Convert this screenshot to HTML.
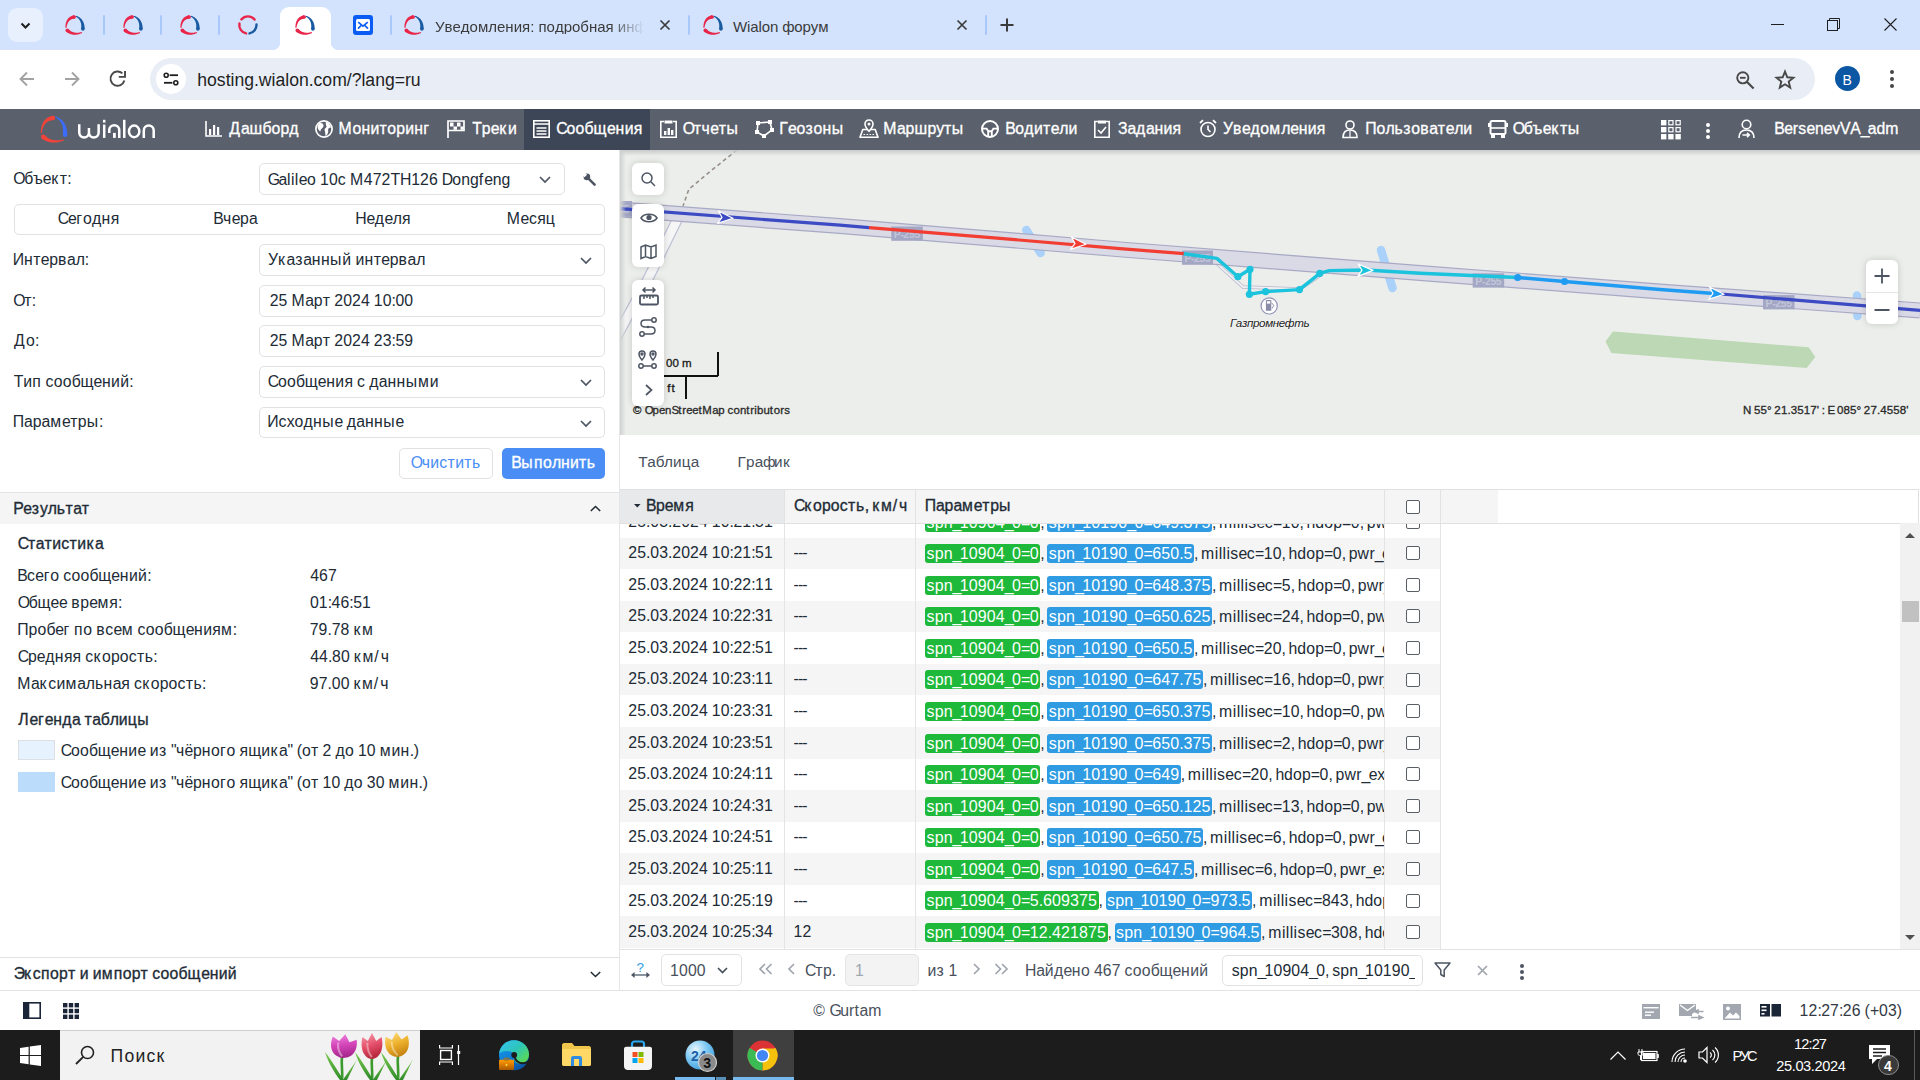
<!DOCTYPE html>
<html><head><meta charset="utf-8"><style>
*{box-sizing:border-box;margin:0;padding:0}
html,body{width:1920px;height:1080px;overflow:hidden;background:#fff;font-family:"Liberation Sans",sans-serif;color:#212b36}
.a{position:absolute}
.t{position:absolute;white-space:nowrap;line-height:1;font-kerning:none}
i{font-style:inherit}
svg{position:absolute;overflow:visible}
.km34{letter-spacing:-1.70px}.km33{letter-spacing:-1.65px}.km31{letter-spacing:-1.55px}.km30{letter-spacing:-1.50px}.km28{letter-spacing:-1.40px}.km26{letter-spacing:-1.30px}.km23{letter-spacing:-1.15px}.km22{letter-spacing:-1.10px}.km21{letter-spacing:-1.05px}.km20{letter-spacing:-1.00px}.km19{letter-spacing:-0.95px}.km18{letter-spacing:-0.90px}.km17{letter-spacing:-0.85px}.km14{letter-spacing:-0.70px}.km11{letter-spacing:-0.55px}.km9{letter-spacing:-0.45px}.km8{letter-spacing:-0.40px}.km7{letter-spacing:-0.35px}.km6{letter-spacing:-0.30px}.km5{letter-spacing:-0.25px}.km4{letter-spacing:-0.20px}.km3{letter-spacing:-0.15px}.km2{letter-spacing:-0.10px}.km1{letter-spacing:-0.05px}.k1{letter-spacing:0.05px}.k2{letter-spacing:0.10px}.k3{letter-spacing:0.15px}.k4{letter-spacing:0.20px}.k5{letter-spacing:0.25px}.k6{letter-spacing:0.30px}.k7{letter-spacing:0.35px}.k8{letter-spacing:0.40px}.k9{letter-spacing:0.45px}.k10{letter-spacing:0.50px}.k11{letter-spacing:0.55px}.k12{letter-spacing:0.60px}.k13{letter-spacing:0.65px}.k14{letter-spacing:0.70px}.k15{letter-spacing:0.75px}.k16{letter-spacing:0.80px}.k17{letter-spacing:0.85px}.k18{letter-spacing:0.90px}.k20{letter-spacing:1.00px}.k22{letter-spacing:1.10px}.k23{letter-spacing:1.15px}.k24{letter-spacing:1.20px}.k27{letter-spacing:1.35px}.k32{letter-spacing:1.60px}.k33{letter-spacing:1.65px}.k35{letter-spacing:1.75px}.k36{letter-spacing:1.80px}.k43{letter-spacing:2.15px}</style></head><body>
<svg width="0" height="0" style="position:absolute"><defs><symbol id="wl" viewBox="0 0 20 20"><path d="M8.97 0.22 L8.36 0.35 L7.77 0.52 L7.20 0.71 L6.65 0.93 L6.12 1.18 L5.61 1.45 L5.12 1.74 L4.66 2.07 L4.22 2.41 L3.80 2.78 L3.41 3.18 L3.05 3.59 L2.71 4.03 L2.39 4.48 L2.10 4.96 L1.84 5.45 L1.60 5.97 L1.38 6.49 L1.18 7.04 L1.01 7.61 L0.86 8.19 L0.73 8.79 L0.62 9.40 L0.53 10.04 L0.45 10.69 L0.40 11.36 L0.37 12.05 L0.35 12.76 L1.45 12.84 L1.55 12.17 L1.67 11.53 L1.80 10.91 L1.96 10.32 L2.12 9.76 L2.31 9.22 L2.50 8.71 L2.71 8.23 L2.94 7.78 L3.18 7.35 L3.43 6.95 L3.70 6.58 L3.97 6.23 L4.26 5.92 L4.55 5.62 L4.86 5.36 L5.18 5.11 L5.50 4.89 L5.84 4.69 L6.18 4.51 L6.54 4.36 L6.91 4.22 L7.30 4.10 L7.69 4.00 L8.10 3.92 L8.53 3.86 L8.97 3.81 L9.43 3.78 Z" fill="#e8264a"/><circle cx="9.20" cy="2.00" r="1.80" fill="#e8264a"/><path d="M1.09 16.73 L1.58 17.10 L2.08 17.45 L2.59 17.78 L3.11 18.08 L3.64 18.35 L4.17 18.60 L4.71 18.83 L5.26 19.03 L5.81 19.20 L6.37 19.35 L6.93 19.48 L7.50 19.58 L8.07 19.66 L8.65 19.71 L9.23 19.74 L9.82 19.75 L10.41 19.73 L11.00 19.69 L11.60 19.63 L12.20 19.55 L12.81 19.44 L13.42 19.32 L14.03 19.17 L14.65 19.00 L15.27 18.81 L15.90 18.60 L16.53 18.37 L17.17 18.12 L16.83 17.08 L16.19 17.24 L15.56 17.37 L14.95 17.48 L14.34 17.58 L13.75 17.65 L13.17 17.70 L12.61 17.73 L12.05 17.74 L11.51 17.73 L10.98 17.70 L10.47 17.65 L9.97 17.58 L9.48 17.49 L9.00 17.39 L8.53 17.26 L8.08 17.12 L7.64 16.96 L7.22 16.78 L6.80 16.59 L6.40 16.38 L6.00 16.15 L5.62 15.90 L5.25 15.64 L4.88 15.36 L4.53 15.06 L4.18 14.75 L3.84 14.42 L3.51 14.07 Z" fill="#e8264a"/><circle cx="2.30" cy="15.40" r="1.80" fill="#e8264a"/><path d="M10.78 1.70 L11.26 1.97 L11.72 2.25 L12.15 2.55 L12.55 2.85 L12.94 3.17 L13.30 3.50 L13.63 3.85 L13.95 4.20 L14.24 4.56 L14.51 4.94 L14.76 5.33 L14.99 5.73 L15.20 6.14 L15.39 6.56 L15.56 6.99 L15.71 7.44 L15.84 7.90 L15.96 8.37 L16.06 8.85 L16.13 9.35 L16.19 9.87 L16.24 10.40 L16.26 10.94 L16.26 11.50 L16.25 12.08 L16.22 12.67 L16.17 13.28 L16.10 13.91 L19.70 14.09 L19.68 13.36 L19.64 12.65 L19.58 11.95 L19.50 11.27 L19.39 10.61 L19.27 9.96 L19.12 9.33 L18.95 8.72 L18.75 8.12 L18.54 7.55 L18.30 6.99 L18.04 6.46 L17.76 5.94 L17.46 5.44 L17.14 4.97 L16.79 4.51 L16.43 4.08 L16.04 3.66 L15.64 3.27 L15.22 2.90 L14.78 2.55 L14.32 2.23 L13.84 1.92 L13.35 1.64 L12.84 1.37 L12.32 1.13 L11.78 0.90 L11.22 0.70 Z" fill="#1a5aa0"/><circle cx="17.90" cy="14.00" r="1.80" fill="#1a5aa0"/></symbol></defs></svg>
<div class="a" style="left:0.00px;top:0.00px;width:1920.00px;height:50.00px;background:#d3e3fd"></div>
<div class="a" style="left:0.00px;top:50.00px;width:1920.00px;height:59.00px;background:#fff;border-radius:10px 10px 0 0"></div>
<div class="a" style="left:150.00px;top:58.00px;width:1665.00px;height:42.00px;background:#e9eef6;border-radius:21px"></div>
<div class="a" style="left:8.00px;top:8.00px;width:35.00px;height:34.00px;border-radius:9px;background:#e9f0fd"></div>
<svg style="left:18.00px;top:18.00px" width="15" height="15" viewBox="0 0 15 15"><path d="M3.5 5.5 L7.5 9.5 L11.5 5.5" fill="none" stroke="#1f1f1f" stroke-width="2"/></svg>
<svg style="left:65px;top:15px" width="20" height="20"><use href="#wl"/></svg>
<svg style="left:123px;top:15px" width="20" height="20"><use href="#wl"/></svg>
<svg style="left:180px;top:15px" width="20" height="20"><use href="#wl"/></svg>
<div class="a" style="left:103.00px;top:15.00px;width:2.00px;height:20.00px;background:#a8c7fa;border-radius:1px"></div>
<div class="a" style="left:160.00px;top:15.00px;width:2.00px;height:20.00px;background:#a8c7fa;border-radius:1px"></div>
<div class="a" style="left:218.00px;top:15.00px;width:2.00px;height:20.00px;background:#a8c7fa;border-radius:1px"></div>
<div class="a" style="left:390.00px;top:15.00px;width:2.00px;height:20.00px;background:#a8c7fa;border-radius:1px"></div>
<div class="a" style="left:688.00px;top:15.00px;width:2.00px;height:20.00px;background:#a8c7fa;border-radius:1px"></div>
<div class="a" style="left:985.00px;top:15.00px;width:2.00px;height:20.00px;background:#a8c7fa;border-radius:1px"></div>
<svg style="left:238.00px;top:15.00px" width="20" height="20" viewBox="0 0 20 20"><path d="M3.41 4.36 A8.6 8.6 0 0 1 16.58 4.59" fill="none" stroke="#e8264a" stroke-width="2.4" stroke-linecap="round"/><path d="M8.11 18.41 A8.6 8.6 0 0 1 1.43 8.51" fill="none" stroke="#e8264a" stroke-width="2.4" stroke-linecap="round"/><path d="M18.49 9.55 A8.6 8.6 0 0 1 11.54 18.44" fill="none" stroke="#1a5aa0" stroke-width="2.4" stroke-linecap="round"/></svg>
<div class="a" style="left:280.00px;top:7.00px;width:51.00px;height:43.00px;background:#fff;border-radius:9px 9px 0 0"></div>
<div class="a" style="left:272.00px;top:42.00px;width:8.00px;height:8.00px;background:radial-gradient(circle at 0 0,#d3e3fd 8px,#fff 8.6px)"></div>
<div class="a" style="left:331.00px;top:42.00px;width:8.00px;height:8.00px;background:radial-gradient(circle at 100% 0,#d3e3fd 8px,#fff 8.6px)"></div>
<svg style="left:295px;top:15px" width="20" height="20"><use href="#wl"/></svg>
<div class="a" style="left:353.00px;top:15.00px;width:20.00px;height:20.00px;border-radius:3px;background:#0a5cf5"></div>
<div class="a" style="left:356.00px;top:19.00px;width:14.00px;height:12.00px;border-radius:1.5px;background:#fff"></div>
<svg style="left:356.00px;top:19.00px" width="14" height="12" viewBox="0 0 14 12"><path d="M2.2 3.2 L7 7.2 L11.8 3.2 M2 9.6 L5 6.6 M12 9.6 L9 6.6" fill="none" stroke="#0a5cf5" stroke-width="1.6"/></svg>
<svg style="left:404px;top:15px" width="20" height="20"><use href="#wl"/></svg>
<div class="t" style="left:435.00px;top:18.65px;font-size:15.00px;color:#3b3b3b;width:209px;overflow:hidden;-webkit-mask-image:linear-gradient(90deg,#000 84%,transparent 100%);">Уведомления: подробная информация</div>
<svg style="left:660.00px;top:20.00px" width="10" height="10" viewBox="0 0 10 10"><path d="M0.5 0.5 L9.5 9.5 M9.5 0.5 L0.5 9.5" stroke="#3b3b3b" stroke-width="1.7"/></svg>
<svg style="left:703px;top:15px" width="20" height="20"><use href="#wl"/></svg>
<div class="t" style="left:733.00px;top:18.65px;font-size:15.00px;color:#3b3b3b;letter-spacing:-0.124px;">Wialon форум</div>
<svg style="left:957.00px;top:20.00px" width="10" height="10" viewBox="0 0 10 10"><path d="M0.5 0.5 L9.5 9.5 M9.5 0.5 L0.5 9.5" stroke="#3b3b3b" stroke-width="1.7"/></svg>
<svg style="left:1000.00px;top:18.00px" width="14" height="14" viewBox="0 0 14 14"><path d="M7 0.5 V13.5 M0.5 7 H13.5" stroke="#3b3b3b" stroke-width="2"/></svg>
<div class="a" style="left:1771.00px;top:24.00px;width:13.00px;height:1.00px;background:#1f1f1f"></div>
<svg style="left:1827.00px;top:18.00px" width="13" height="13" viewBox="0 0 13 13"><rect x="0.5" y="2.5" width="10" height="10" fill="none" stroke="#1f1f1f" stroke-width="1"/><path d="M2.5 2.5 V0.5 H12.5 V10.5 H10.5" fill="none" stroke="#1f1f1f" stroke-width="1"/></svg>
<svg style="left:1884.00px;top:18.00px" width="13" height="13" viewBox="0 0 13 13"><path d="M0.5 0.5 L12.5 12.5 M12.5 0.5 L0.5 12.5" stroke="#1f1f1f" stroke-width="1.1"/></svg>
<svg style="left:19.00px;top:71.00px" width="16" height="16" viewBox="0 0 16 16"><path d="M15 8 H2 M8 1.5 L1.5 8 L8 14.5" fill="none" stroke="#a3a3a3" stroke-width="1.9"/></svg>
<svg style="left:64.00px;top:71.00px" width="16" height="16" viewBox="0 0 16 16"><path d="M1 8 H14 M8 1.5 L14.5 8 L8 14.5" fill="none" stroke="#a3a3a3" stroke-width="1.9"/></svg>
<svg style="left:108.00px;top:70.00px" width="19" height="18" viewBox="0 0 19 18"><path d="M16.4 10.6 A7.1 7.1 0 1 1 14.4 3.4" fill="none" stroke="#474747" stroke-width="1.9"/><path d="M10.8 6.9 H17 V0.9" fill="none" stroke="#474747" stroke-width="1.9"/></svg>
<div class="a" style="left:156.00px;top:64.00px;width:30.00px;height:30.00px;border-radius:15px;background:#fff"></div>
<svg style="left:163.00px;top:72.00px" width="16" height="14" viewBox="0 0 16 14"><circle cx="3.2" cy="3.2" r="2" fill="none" stroke="#1f1f1f" stroke-width="1.6"/><path d="M6.6 3.2 H15" stroke="#1f1f1f" stroke-width="1.8"/><circle cx="12.8" cy="10.8" r="2" fill="none" stroke="#1f1f1f" stroke-width="1.6"/><path d="M1 10.8 H9.4" stroke="#1f1f1f" stroke-width="1.8"/></svg>
<div class="t" style="left:197.30px;top:71.64px;font-size:17.60px;color:#1f1f1f;letter-spacing:-0.007px;">hosting.wialon.com/?lang=ru</div>
<svg style="left:1736.00px;top:71.00px" width="19" height="19" viewBox="0 0 19 19"><circle cx="6.8" cy="6.8" r="5.6" fill="none" stroke="#474747" stroke-width="1.9"/><path d="M4 6.8 H9.6" stroke="#474747" stroke-width="1.9"/><path d="M10.8 10.8 L17.6 17.6" stroke="#474747" stroke-width="2.1"/></svg>
<svg style="left:1774.00px;top:69.00px" width="22" height="22" viewBox="0 0 22 22"><path d="M11 2.6 L13.3 8.3 L19.4 8.7 L14.7 12.6 L16.2 18.6 L11 15.3 L5.8 18.6 L7.3 12.6 L2.6 8.7 L8.7 8.3 Z" fill="none" stroke="#474747" stroke-width="1.9" stroke-linejoin="miter"/></svg>
<div class="a" style="left:1835.00px;top:66.00px;width:25.00px;height:25.00px;border-radius:13px;background:#0b57a4"></div>
<div class="t" style="left:1842.50px;top:72.70px;font-size:14.00px;color:#fff;">B</div>
<div class="a" style="left:1890.30px;top:70.00px;width:4.00px;height:4.00px;border-radius:2px;background:#474747"></div>
<div class="a" style="left:1890.30px;top:77.00px;width:4.00px;height:4.00px;border-radius:2px;background:#474747"></div>
<div class="a" style="left:1890.30px;top:84.00px;width:4.00px;height:4.00px;border-radius:2px;background:#474747"></div>
<div class="a" style="left:0.00px;top:109.00px;width:1920.00px;height:41.00px;background:#5a606c"></div>
<div class="a" style="left:524.00px;top:109.00px;width:126.00px;height:41.00px;background:#3d4656"></div>
<svg style="left:0.00px;top:0.00px" width="1" height="1" viewBox="0 0 1 1"><path d="M52.59 115.78 L51.75 115.97 L50.94 116.20 L50.15 116.47 L49.39 116.77 L48.67 117.11 L47.97 117.48 L47.30 117.89 L46.67 118.33 L46.07 118.81 L45.50 119.31 L44.96 119.85 L44.47 120.42 L44.00 121.02 L43.57 121.65 L43.18 122.30 L42.81 122.98 L42.48 123.68 L42.19 124.41 L41.92 125.17 L41.68 125.94 L41.47 126.75 L41.29 127.58 L41.14 128.43 L41.01 129.31 L40.91 130.21 L40.84 131.14 L40.79 132.10 L40.77 133.09 L41.75 133.15 L41.89 132.21 L42.06 131.30 L42.25 130.43 L42.46 129.59 L42.70 128.80 L42.96 128.04 L43.24 127.31 L43.54 126.63 L43.86 125.98 L44.20 125.37 L44.56 124.80 L44.93 124.27 L45.33 123.77 L45.74 123.31 L46.16 122.89 L46.60 122.50 L47.06 122.15 L47.53 121.83 L48.01 121.54 L48.51 121.28 L49.03 121.05 L49.56 120.85 L50.11 120.68 L50.68 120.53 L51.27 120.42 L51.88 120.32 L52.52 120.26 L53.17 120.22 Z" fill="#f0443a"/><circle cx="52.88" cy="118.00" r="2.24" fill="#f0443a"/><path d="M41.71 138.41 L42.39 138.93 L43.09 139.41 L43.79 139.86 L44.51 140.27 L45.23 140.65 L45.97 141.00 L46.72 141.31 L47.47 141.58 L48.23 141.82 L49.00 142.03 L49.78 142.20 L50.57 142.34 L51.36 142.45 L52.15 142.52 L52.96 142.56 L53.76 142.57 L54.58 142.55 L55.40 142.49 L56.23 142.41 L57.06 142.29 L57.90 142.14 L58.74 141.97 L59.59 141.76 L60.45 141.53 L61.31 141.27 L62.19 140.97 L63.07 140.65 L63.95 140.30 L63.65 139.38 L62.74 139.60 L61.86 139.79 L60.99 139.95 L60.14 140.08 L59.30 140.18 L58.48 140.26 L57.68 140.30 L56.90 140.32 L56.13 140.30 L55.38 140.26 L54.65 140.19 L53.93 140.09 L53.24 139.97 L52.56 139.82 L51.90 139.64 L51.25 139.44 L50.63 139.21 L50.02 138.96 L49.42 138.69 L48.84 138.38 L48.28 138.06 L47.73 137.71 L47.20 137.34 L46.68 136.94 L46.18 136.52 L45.68 136.07 L45.20 135.60 L44.73 135.11 Z" fill="#f0443a"/><circle cx="43.22" cy="136.76" r="2.24" fill="#f0443a"/><path d="M55.21 117.33 L55.89 117.71 L56.53 118.11 L57.15 118.53 L57.73 118.96 L58.28 119.42 L58.79 119.89 L59.27 120.37 L59.73 120.88 L60.14 121.40 L60.53 121.94 L60.89 122.49 L61.22 123.06 L61.52 123.65 L61.79 124.25 L62.04 124.87 L62.26 125.50 L62.45 126.16 L62.61 126.83 L62.75 127.52 L62.86 128.24 L62.95 128.97 L63.01 129.72 L63.04 130.49 L63.05 131.29 L63.03 132.10 L62.99 132.94 L62.92 133.80 L62.82 134.68 L67.30 134.92 L67.27 133.90 L67.22 132.91 L67.13 131.94 L67.02 131.00 L66.87 130.08 L66.70 129.18 L66.49 128.31 L66.25 127.47 L65.99 126.65 L65.69 125.85 L65.36 125.09 L65.00 124.35 L64.61 123.64 L64.20 122.95 L63.75 122.30 L63.28 121.67 L62.77 121.08 L62.25 120.51 L61.69 119.97 L61.11 119.46 L60.50 118.99 L59.87 118.54 L59.22 118.12 L58.54 117.72 L57.84 117.36 L57.11 117.02 L56.37 116.71 L55.59 116.43 Z" fill="#3c6cf8"/><circle cx="65.06" cy="134.80" r="2.24" fill="#3c6cf8"/></svg>
<svg style="left:78.00px;top:119.00px" width="80" height="21" viewBox="0 0 80 21"><g fill="none" stroke="#fff" stroke-width="2.5"><path d="M1.25 5.3 V13.6 A4.85 4.85 0 0 0 10.95 13.6 V9 M10.95 13.6 A4.85 4.85 0 0 0 20.65 13.6 V5.3"/><path d="M26.2 5.6 V18.9"/><path d="M31.25 13.9 V11.25 A5 5 0 0 1 41.25 11.25 V18.9"/><path d="M46.25 0.8 V18.9"/><ellipse cx="56.15" cy="12.4" rx="5.2" ry="5.85"/><path d="M65.8 18.9 V11.45 A4.95 4.95 0 0 1 75.7 11.45 V18.9"/></g><rect x="24.95" y="0.8" width="2.5" height="2.8" fill="#fff"/><rect x="35" y="13.9" width="2.8" height="5" fill="#fff"/></svg>
<div class="t" style="left:229.18px;top:121.17px;font-size:15.80px;color:#fff;font-weight:400;-webkit-text-stroke:0.32px #fff;"><i class="k23">Д</i><i class="km5">а</i><i class="k5">ш</i><i class="km3">б</i><i class="k4">о</i><i class="k2">р</i><i class="k11">д</i></div>
<div class="t" style="left:338.60px;top:121.17px;font-size:15.80px;color:#fff;font-weight:400;-webkit-text-stroke:0.32px #fff;"><i class="k13">М</i><i class="k4">о</i><i class="k6">н</i><i class="k4">и</i><i class="k12">т</i><i class="k4">о</i><i class="k2">р</i><i class="k4">и</i><i class="k6">н</i><i class="k17">г</i></div>
<div class="t" style="left:472.15px;top:121.17px;font-size:15.80px;color:#fff;font-weight:400;-webkit-text-stroke:0.32px #fff;">Т<i class="k2">р</i><i class="km6">е</i><i class="k36">к</i><i class="k4">и</i></div>
<div class="t" style="left:556.20px;top:121.17px;font-size:15.80px;color:#fff;font-weight:400;-webkit-text-stroke:0.32px #fff;"><i class="km22">С</i><i class="k4">о</i><i class="k4">о</i><i class="km3">б</i><i class="k14">щ</i><i class="km6">е</i><i class="k6">н</i><i class="k4">и</i><i class="k4">я</i></div>
<div class="t" style="left:682.75px;top:121.17px;font-size:15.80px;color:#fff;font-weight:400;-webkit-text-stroke:0.32px #fff;"><i class="km28">О</i><i class="k12">т</i><i class="k9">ч</i><i class="km6">е</i><i class="k12">т</i><i class="k27">ы</i></div>
<div class="t" style="left:779.20px;top:121.17px;font-size:15.80px;color:#fff;font-weight:400;-webkit-text-stroke:0.32px #fff;"><i class="k5">Г</i><i class="km6">е</i><i class="k4">о</i><i class="k17">з</i><i class="k4">о</i><i class="k6">н</i><i class="k27">ы</i></div>
<div class="t" style="left:883.20px;top:121.17px;font-size:15.80px;color:#fff;font-weight:400;-webkit-text-stroke:0.32px #fff;"><i class="k13">М</i><i class="km5">а</i><i class="k2">р</i><i class="k5">ш</i><i class="k2">р</i><i class="km3">у</i><i class="k12">т</i><i class="k27">ы</i></div>
<div class="t" style="left:1005.20px;top:121.17px;font-size:15.80px;color:#fff;font-weight:400;-webkit-text-stroke:0.32px #fff;"><i class="km11">В</i><i class="k4">о</i><i class="k11">д</i><i class="k4">и</i><i class="k12">т</i><i class="km6">е</i><i class="km4">л</i><i class="k4">и</i></div>
<div class="t" style="left:1117.98px;top:121.17px;font-size:15.80px;color:#fff;font-weight:400;-webkit-text-stroke:0.32px #fff;"><i class="k1">З</i><i class="km5">а</i><i class="k11">д</i><i class="km5">а</i><i class="k6">н</i><i class="k4">и</i><i class="k4">я</i></div>
<div class="t" style="left:1223.08px;top:121.17px;font-size:15.80px;color:#fff;font-weight:400;-webkit-text-stroke:0.32px #fff;"><i class="km2">У</i><i class="k12">в</i><i class="km6">е</i><i class="k11">д</i><i class="k4">о</i><i class="k20">м</i><i class="km4">л</i><i class="km6">е</i><i class="k6">н</i><i class="k4">и</i><i class="k4">я</i></div>
<div class="t" style="left:1365.22px;top:121.17px;font-size:15.80px;color:#fff;font-weight:400;-webkit-text-stroke:0.32px #fff;"><i class="km3">П</i><i class="k4">о</i><i class="km4">л</i><i class="k10">ь</i><i class="k17">з</i><i class="k4">о</i><i class="k12">в</i><i class="km5">а</i><i class="k12">т</i><i class="km6">е</i><i class="km4">л</i><i class="k4">и</i></div>
<div class="t" style="left:1512.75px;top:121.17px;font-size:15.80px;color:#fff;font-weight:400;-webkit-text-stroke:0.32px #fff;"><i class="km28">О</i><i class="km3">б</i><i class="k5">ъ</i><i class="km6">е</i><i class="k36">к</i><i class="k12">т</i><i class="k27">ы</i></div>
<div class="t" style="left:1774.20px;top:121.17px;font-size:15.80px;color:#fff;font-weight:400;-webkit-text-stroke:0.32px #fff;"><i class="km11">B</i><i class="km6">e</i><i class="k6">r</i><i class="k5">s</i><i class="km6">e</i>n<i class="km6">e</i><i class="km1">v</i><i class="km7">V</i><i class="km1">A</i><i class="km34">_</i><i class="km5">a</i><i class="k2">d</i><i class="k12">m</i></div>
<svg style="left:205.00px;top:121.00px" width="17" height="16" viewBox="0 0 17 16"><path d="M1 0 V15 H17" fill="none" stroke="#fff" stroke-width="1.6"/><rect x="4" y="8" width="2.2" height="6" fill="#fff"/><rect x="8" y="4" width="2.2" height="10" fill="#fff"/><rect x="12" y="6" width="2.2" height="8" fill="#fff"/></svg>
<svg style="left:315.00px;top:120.00px" width="18" height="18" viewBox="0 0 18 18"><circle cx="9" cy="9" r="8.1" fill="none" stroke="#fff" stroke-width="1.7"/><path d="M4.2 3.2 C6.5 2.6 9.2 3.6 8.4 6.4 C7.8 8.6 5.2 8.6 5.6 11.6 C3.8 10.8 2.4 8.6 2.6 6.6 C2.8 5.2 3.4 4 4.2 3.2 Z" fill="#fff"/><path d="M11 1.8 C13.4 2.4 15.4 4.6 16 7.6 C14.4 7.6 12.6 8.6 13.2 10.8 C13.6 12.8 12.2 15 10.6 16.2 C10 14.2 10.6 12.2 9.6 10.6 C9 9.2 10.8 8 11.6 6.8 C11.2 5.2 10.2 3.6 11 1.8 Z" fill="#fff"/></svg>
<svg style="left:447.00px;top:120.00px" width="18" height="18" viewBox="0 0 18 18"><path d="M1 18 V1 H17 V10.5 H1" fill="none" stroke="#fff" stroke-width="1.7"/><path d="M3 2.5 h3.5 v4 h-3.5z M10 2.5 h3.5 v4 h-3.5z M6.5 6.5 h3.5 v3.2 h-3.5z M13.5 6.5 h3 v3.2 h-3z" fill="#fff"/></svg>
<svg style="left:533.00px;top:120.00px" width="17" height="18" viewBox="0 0 17 18"><rect x="0.8" y="0.8" width="15.4" height="16.4" fill="none" stroke="#fff" stroke-width="1.6"/><path d="M0.8 4 H16.2 M3.5 8 H13.5 M3.5 11 H13.5 M3.5 14 H13.5" stroke="#fff" stroke-width="1.6"/></svg>
<svg style="left:660.00px;top:120.00px" width="17" height="18" viewBox="0 0 17 18"><path d="M4 1.5 H0.8 V17.2 H16.2 V1.5 H13" fill="none" stroke="#fff" stroke-width="1.6"/><rect x="4.5" y="0.5" width="8" height="3" fill="#fff"/><rect x="4" y="11" width="2.4" height="4" fill="#fff"/><rect x="7.6" y="8" width="2.4" height="7" fill="#fff"/><rect x="11" y="10" width="2.4" height="5" fill="#fff"/></svg>
<svg style="left:755.00px;top:120.00px" width="19" height="18" viewBox="0 0 19 18"><path d="M3 3 L15 2 L17 10 L9 16 L2 12 Z" fill="none" stroke="#fff" stroke-width="1.6"/><g fill="#fff"><rect x="1" y="1" width="4" height="4"/><rect x="13" y="0" width="4" height="4"/><rect x="15" y="8" width="4" height="4"/><rect x="7" y="14" width="4" height="4"/><rect x="0" y="10" width="4" height="4"/></g></svg>
<svg style="left:859.00px;top:119.00px" width="20" height="19" viewBox="0 0 20 19"><path d="M1 18.2 L3.8 10.5 H16.2 L19 18.2 Z" fill="none" stroke="#fff" stroke-width="1.6" stroke-linejoin="round"/><path d="M10 1 C7.4 1 6 2.9 6 4.9 C6 7.8 10 12.2 10 12.2 C10 12.2 14 7.8 14 4.9 C14 2.9 12.6 1 10 1 Z" fill="#5a606c" stroke="#fff" stroke-width="1.6"/><circle cx="10" cy="5" r="1.5" fill="#fff"/><path d="M4.5 15.5 H15.5" stroke="#fff" stroke-width="1.1" stroke-dasharray="1.6 1.4"/></svg>
<svg style="left:981.00px;top:120.00px" width="18" height="18" viewBox="0 0 18 18"><circle cx="9" cy="9" r="8" fill="none" stroke="#fff" stroke-width="2"/><path d="M1.5 8.6 H5.6 L7.2 11.2 H10.8 L12.4 8.6 H16.5 M7.2 11.2 V16.6 M10.8 11.2 V16.6" fill="none" stroke="#fff" stroke-width="1.9"/></svg>
<svg style="left:1094.00px;top:120.00px" width="16" height="18" viewBox="0 0 16 18"><path d="M4 1.5 H0.8 V17.2 H15.2 V1.5 H12" fill="none" stroke="#fff" stroke-width="1.6"/><rect x="4" y="0.5" width="8" height="3" fill="#fff"/><path d="M4 10 L7 13 L12 7" fill="none" stroke="#fff" stroke-width="1.6"/></svg>
<svg style="left:1199.00px;top:119.00px" width="18" height="19" viewBox="0 0 18 19"><circle cx="9" cy="10.5" r="7" fill="none" stroke="#fff" stroke-width="1.6"/><path d="M9 6.5 V10.5 L11.5 13" fill="none" stroke="#fff" stroke-width="1.6"/><path d="M1 4 L4 1.2 M17 4 L14 1.2" stroke="#fff" stroke-width="1.8"/></svg>
<svg style="left:1342.00px;top:120.00px" width="16" height="18" viewBox="0 0 16 18"><circle cx="8" cy="5" r="4" fill="none" stroke="#fff" stroke-width="1.6"/><path d="M1 17.5 C1 12 4 10 8 10 C12 10 15 12 15 17.5 Z" fill="none" stroke="#fff" stroke-width="1.6"/><path d="M8 11 V17" stroke="#fff" stroke-width="1.2"/></svg>
<svg style="left:1488.00px;top:120.00px" width="20" height="18" viewBox="0 0 20 18"><rect x="2.5" y="1" width="15" height="13" rx="1.5" fill="none" stroke="#fff" stroke-width="2"/><path d="M2.5 8 H17.5" stroke="#fff" stroke-width="1.6"/><rect x="0" y="3" width="2" height="4" fill="#fff"/><rect x="18" y="3" width="2" height="4" fill="#fff"/><rect x="3" y="13" width="4" height="5" fill="#fff"/><rect x="13" y="13" width="4" height="5" fill="#fff"/></svg>
<svg style="left:1661.00px;top:120.00px" width="20" height="19" viewBox="0 0 20 19"><rect x="0" y="0" width="5.4" height="5.4" fill="#fff"/><rect x="7.8" y="0.6" width="4.2" height="4.2" fill="none" stroke="#fff" stroke-width="1.2"/><rect x="15" y="0.6" width="4.2" height="4.2" fill="none" stroke="#fff" stroke-width="1.2"/><rect x="0" y="7" width="5.4" height="5.4" fill="#fff"/><rect x="7.8" y="7.6" width="4.2" height="4.2" fill="none" stroke="#fff" stroke-width="1.2"/><rect x="15" y="7.6" width="4.2" height="4.2" fill="none" stroke="#fff" stroke-width="1.2"/><rect x="0" y="14" width="5.4" height="5.4" fill="#fff"/><rect x="7.2" y="14" width="5.4" height="5.4" fill="#fff"/><rect x="14.4" y="14" width="5.4" height="5.4" fill="#fff"/></svg>
<div class="a" style="left:1706.00px;top:123.00px;width:4.00px;height:4.00px;border-radius:2px;background:#fff"></div>
<div class="a" style="left:1706.00px;top:129.00px;width:4.00px;height:4.00px;border-radius:2px;background:#fff"></div>
<div class="a" style="left:1706.00px;top:135.00px;width:4.00px;height:4.00px;border-radius:2px;background:#fff"></div>
<svg style="left:1738.00px;top:119.00px" width="17" height="20" viewBox="0 0 17 20"><circle cx="8.5" cy="5.5" r="4.3" fill="none" stroke="#fff" stroke-width="1.6"/><path d="M1 19 C1 13.5 4 11 8.5 11 C13 11 16 13.5 16 19" fill="none" stroke="#fff" stroke-width="1.6"/><path d="M4.5 16 H11 M9 13.8 L11.3 16 L9 18.2" fill="none" stroke="#fff" stroke-width="1.5"/></svg>
<div class="a" style="left:0.00px;top:150.00px;width:619.00px;height:840.00px;background:#fff"></div>
<div class="a" style="left:619.00px;top:150.00px;width:1.00px;height:840.00px;background:#e6e6e6"></div>
<div class="t" style="left:13.35px;top:171.17px;font-size:15.80px;color:#212b36;"><i class="km28">О</i><i class="km6">б</i><i class="km1">ъ</i><i class="km8">е</i><i class="k33">к</i><i class="k7">т</i><i class="km11">:</i></div>
<div class="a" style="left:259.00px;top:163.00px;width:306.00px;height:32.00px;border:1px solid #e1e2e5;border-radius:5px;background:#fff"></div>
<div class="t" style="left:267.71px;top:171.67px;font-size:15.80px;color:#212b36;"><i class="km31">G</i><i class="km4">a</i><i class="k7">l</i><i class="k7">i</i><i class="k7">l</i><i class="km8">e</i><i class="k4">o</i><i class="km9"> </i><i class="k2">1</i><i class="k2">0</i><i class="k7">c</i><i class="km9"> </i><i class="k13">M</i><i class="k2">4</i><i class="k2">7</i><i class="k2">2</i><i class="km4">T</i><i class="km3">H</i><i class="k2">1</i><i class="k2">2</i><i class="k2">6</i><i class="km9"> </i><i class="km21">D</i><i class="k4">o</i><i class="km1">n</i><i class="k2">g</i><i class="k22">f</i><i class="km8">e</i><i class="km1">n</i><i class="k2">g</i></div>
<svg style="left:539.00px;top:176.00px" width="12" height="7" viewBox="0 0 12 7"><path d="M1 1 L6 6 L11 1" fill="none" stroke="#4d5563" stroke-width="1.7"/></svg>
<svg style="left:582.50px;top:172.50px" width="14" height="14" viewBox="0 0 14 14"><path d="M4.8 4.8 L11.6 11.6" stroke="#4d5563" stroke-width="2.5" stroke-linecap="round"/><circle cx="3.9" cy="3.9" r="3.3" fill="#4d5563"/><rect x="-0.6" y="-0.2" width="4" height="3.6" fill="#fff" transform="rotate(45 1.4 1.6)"/></svg>
<div class="a" style="left:14.00px;top:204.00px;width:591.00px;height:31.00px;border:1px solid #e1e2e5;border-radius:5px;background:#fff"></div>
<div class="t" style="left:57.70px;top:211.47px;font-size:15.80px;color:#212b36;"><i class="km23">С</i><i class="km8">е</i><i class="k17">г</i><i class="k4">о</i><i class="k6">д</i><i class="k8">н</i><i class="k2">я</i></div>
<div class="t" style="left:213.20px;top:211.47px;font-size:15.80px;color:#212b36;"><i class="km14">В</i><i class="k7">ч</i><i class="km8">е</i><i class="k2">р</i><i class="km4">а</i></div>
<div class="t" style="left:355.20px;top:211.47px;font-size:15.80px;color:#212b36;"><i class="km3">Н</i><i class="km8">е</i><i class="k6">д</i><i class="km8">е</i><i class="km2">л</i><i class="k2">я</i></div>
<div class="t" style="left:506.70px;top:211.47px;font-size:15.80px;color:#212b36;"><i class="k13">М</i><i class="km8">е</i><i class="k7">с</i><i class="k2">я</i><i class="k6">ц</i></div>
<div class="t" style="left:12.80px;top:251.77px;font-size:15.80px;color:#212b36;"><i class="km2">И</i><i class="k8">н</i><i class="k7">т</i><i class="km8">е</i><i class="k2">р</i><i class="k13">в</i><i class="km4">а</i><i class="km2">л</i><i class="km11">:</i></div>
<div class="a" style="left:259.00px;top:244.00px;width:346.00px;height:31.50px;border:1px solid #e1e2e5;border-radius:5px;background:#fff"></div>
<div class="t" style="left:268.08px;top:252.07px;font-size:15.80px;color:#212b36;"><i class="km2">У</i><i class="k33">к</i><i class="km4">а</i><i class="k16">з</i><i class="km4">а</i><i class="k8">н</i><i class="k8">н</i><i class="k18">ы</i><i class="k6">й</i><i class="km9"> </i><i class="k6">и</i><i class="k8">н</i><i class="k7">т</i><i class="km8">е</i><i class="k2">р</i><i class="k13">в</i><i class="km4">а</i><i class="km2">л</i></div>
<svg style="left:579.50px;top:257.00px" width="12" height="7" viewBox="0 0 12 7"><path d="M1 1 L6 6 L11 1" fill="none" stroke="#4d5563" stroke-width="1.7"/></svg>
<div class="t" style="left:13.35px;top:292.77px;font-size:15.80px;color:#212b36;"><i class="km28">О</i><i class="k7">т</i><i class="km11">:</i></div>
<div class="a" style="left:259.00px;top:285.00px;width:346.00px;height:31.50px;border:1px solid #e1e2e5;border-radius:5px;background:#fff"></div>
<div class="t" style="left:269.71px;top:293.07px;font-size:15.80px;color:#212b36;"><i class="k2">2</i><i class="k2">5</i><i class="km9"> </i><i class="k13">М</i><i class="km4">а</i><i class="k2">р</i><i class="k7">т</i><i class="km9"> </i><i class="k2">2</i><i class="k2">0</i><i class="k2">2</i><i class="k2">4</i><i class="km9"> </i><i class="k2">1</i><i class="k2">0</i><i class="km11">:</i><i class="k2">0</i><i class="k2">0</i></div>
<div class="t" style="left:13.98px;top:333.17px;font-size:15.80px;color:#212b36;"><i class="k24">Д</i><i class="k4">о</i><i class="km11">:</i></div>
<div class="a" style="left:259.00px;top:325.00px;width:346.00px;height:31.50px;border:1px solid #e1e2e5;border-radius:5px;background:#fff"></div>
<div class="t" style="left:269.71px;top:333.47px;font-size:15.80px;color:#212b36;"><i class="k2">2</i><i class="k2">5</i><i class="km9"> </i><i class="k13">М</i><i class="km4">а</i><i class="k2">р</i><i class="k7">т</i><i class="km9"> </i><i class="k2">2</i><i class="k2">0</i><i class="k2">2</i><i class="k2">4</i><i class="km9"> </i><i class="k2">2</i><i class="k2">3</i><i class="km11">:</i><i class="k2">5</i><i class="k2">9</i></div>
<div class="t" style="left:13.75px;top:373.57px;font-size:15.80px;color:#212b36;"><i class="km4">Т</i><i class="k6">и</i><i class="k11">п</i><i class="km9"> </i><i class="k7">с</i><i class="k4">о</i><i class="k4">о</i><i class="km6">б</i><i class="k2">щ</i><i class="km8">е</i><i class="k8">н</i><i class="k6">и</i><i class="k6">й</i><i class="km11">:</i></div>
<div class="a" style="left:259.00px;top:366.00px;width:346.00px;height:31.50px;border:1px solid #e1e2e5;border-radius:5px;background:#fff"></div>
<div class="t" style="left:267.70px;top:373.87px;font-size:15.80px;color:#212b36;"><i class="km23">С</i><i class="k4">о</i><i class="k4">о</i><i class="km6">б</i><i class="k2">щ</i><i class="km8">е</i><i class="k8">н</i><i class="k6">и</i><i class="k2">я</i><i class="km9"> </i><i class="k7">с</i><i class="km9"> </i><i class="k6">д</i><i class="km4">а</i><i class="k8">н</i><i class="k8">н</i><i class="k18">ы</i><i class="k17">м</i><i class="k6">и</i></div>
<svg style="left:579.50px;top:379.00px" width="12" height="7" viewBox="0 0 12 7"><path d="M1 1 L6 6 L11 1" fill="none" stroke="#4d5563" stroke-width="1.7"/></svg>
<div class="t" style="left:12.82px;top:414.17px;font-size:15.80px;color:#212b36;"><i class="km2">П</i><i class="km4">а</i><i class="k2">р</i><i class="km4">а</i><i class="k17">м</i><i class="km8">е</i><i class="k7">т</i><i class="k2">р</i><i class="k18">ы</i><i class="km11">:</i></div>
<div class="a" style="left:259.00px;top:406.50px;width:346.00px;height:31.50px;border:1px solid #e1e2e5;border-radius:5px;background:#fff"></div>
<div class="t" style="left:267.20px;top:414.47px;font-size:15.80px;color:#212b36;"><i class="km2">И</i><i class="k7">с</i><i class="km1">х</i><i class="k4">о</i><i class="k6">д</i><i class="k8">н</i><i class="k18">ы</i><i class="km8">е</i><i class="km9"> </i><i class="k6">д</i><i class="km4">а</i><i class="k8">н</i><i class="k8">н</i><i class="k18">ы</i><i class="km8">е</i></div>
<svg style="left:579.50px;top:419.50px" width="12" height="7" viewBox="0 0 12 7"><path d="M1 1 L6 6 L11 1" fill="none" stroke="#4d5563" stroke-width="1.7"/></svg>
<div class="a" style="left:398.50px;top:447.50px;width:94.00px;height:31.00px;border:1px solid #e1e2e5;border-radius:5px;background:#fff"></div>
<div class="t" style="left:410.75px;top:454.57px;font-size:15.80px;color:#4a8ef5;"><i class="km28">О</i><i class="k7">ч</i><i class="k6">и</i><i class="k7">с</i><i class="k7">т</i><i class="k6">и</i><i class="k7">т</i><i class="k7">ь</i></div>
<div class="a" style="left:502.00px;top:447.50px;width:103.00px;height:31.00px;border-radius:5px;background:#4a8ef5"></div>
<div class="t" style="left:511.20px;top:454.57px;font-size:15.80px;color:#fff;font-weight:400;-webkit-text-stroke:0.32px #fff;"><i class="km11">В</i><i class="k27">ы</i><i class="k9">п</i><i class="k4">о</i><i class="km4">л</i><i class="k6">н</i><i class="k4">и</i><i class="k12">т</i><i class="k10">ь</i></div>
<div class="a" style="left:0.00px;top:492.00px;width:619.00px;height:1.00px;background:#e3e3e3"></div>
<div class="a" style="left:0.00px;top:493.00px;width:619.00px;height:31.00px;background:#f5f5f5"></div>
<div class="t" style="left:13.20px;top:500.57px;font-size:15.80px;color:#212b36;font-weight:400;-webkit-text-stroke:0.32px #212b36;"><i class="km9">Р</i><i class="km6">е</i><i class="k17">з</i><i class="km3">у</i><i class="km4">л</i><i class="k10">ь</i><i class="k12">т</i><i class="km5">а</i><i class="k12">т</i></div>
<svg style="left:590.00px;top:505.30px" width="11" height="7" viewBox="0 0 11 7"><path d="M0.8 6 L5.5 1.5 L10.2 6" fill="none" stroke="#212b36" stroke-width="1.5"/></svg>
<div class="t" style="left:17.70px;top:536.17px;font-size:15.80px;color:#212b36;font-weight:400;-webkit-text-stroke:0.32px #212b36;"><i class="km22">С</i><i class="k12">т</i><i class="km5">а</i><i class="k12">т</i><i class="k4">и</i><i class="k7">с</i><i class="k12">т</i><i class="k4">и</i><i class="k36">к</i><i class="km5">а</i></div>
<div class="t" style="left:17.20px;top:567.77px;font-size:15.80px;color:#212b36;"><i class="km14">В</i><i class="k7">с</i><i class="km8">е</i><i class="k17">г</i><i class="k4">о</i><i class="km9"> </i><i class="k7">с</i><i class="k4">о</i><i class="k4">о</i><i class="km6">б</i><i class="k2">щ</i><i class="km8">е</i><i class="k8">н</i><i class="k6">и</i><i class="k6">й</i><i class="km11">:</i></div>
<div class="t" style="left:310.14px;top:567.77px;font-size:15.80px;color:#212b36;"><i class="k2">4</i><i class="k2">6</i><i class="k2">7</i></div>
<div class="t" style="left:17.75px;top:594.87px;font-size:15.80px;color:#212b36;"><i class="km28">О</i><i class="km6">б</i><i class="k2">щ</i><i class="km8">е</i><i class="km8">е</i><i class="km9"> </i><i class="k13">в</i><i class="k2">р</i><i class="km8">е</i><i class="k17">м</i><i class="k2">я</i><i class="km11">:</i></div>
<div class="t" style="left:309.88px;top:594.87px;font-size:15.80px;color:#212b36;"><i class="k2">0</i><i class="k2">1</i><i class="km11">:</i><i class="k2">4</i><i class="k2">6</i><i class="km11">:</i><i class="k2">5</i><i class="k2">1</i></div>
<div class="t" style="left:17.22px;top:622.17px;font-size:15.80px;color:#212b36;"><i class="km2">П</i><i class="k2">р</i><i class="k4">о</i><i class="km6">б</i><i class="km8">е</i><i class="k17">г</i><i class="km9"> </i><i class="k11">п</i><i class="k4">о</i><i class="km9"> </i><i class="k13">в</i><i class="k7">с</i><i class="km8">е</i><i class="k17">м</i><i class="km9"> </i><i class="k7">с</i><i class="k4">о</i><i class="k4">о</i><i class="km6">б</i><i class="k2">щ</i><i class="km8">е</i><i class="k8">н</i><i class="k6">и</i><i class="k2">я</i><i class="k17">м</i><i class="km11">:</i></div>
<div class="t" style="left:309.69px;top:622.17px;font-size:15.80px;color:#212b36;"><i class="k2">7</i><i class="k2">9</i><i class="km4">.</i><i class="k2">7</i><i class="k2">8</i><i class="km9"> </i><i class="k33">к</i><i class="k17">м</i></div>
<div class="t" style="left:17.70px;top:649.17px;font-size:15.80px;color:#212b36;"><i class="km23">С</i><i class="k2">р</i><i class="km8">е</i><i class="k6">д</i><i class="k8">н</i><i class="k2">я</i><i class="k2">я</i><i class="km9"> </i><i class="k7">с</i><i class="k33">к</i><i class="k4">о</i><i class="k2">р</i><i class="k4">о</i><i class="k7">с</i><i class="k7">т</i><i class="k7">ь</i><i class="km11">:</i></div>
<div class="t" style="left:310.14px;top:649.17px;font-size:15.80px;color:#212b36;"><i class="k2">4</i><i class="k2">4</i><i class="km4">.</i><i class="k2">8</i><i class="k2">0</i><i class="km9"> </i><i class="k33">к</i><i class="k17">м</i><i class="k43">/</i><i class="k7">ч</i></div>
<div class="t" style="left:17.20px;top:676.17px;font-size:15.80px;color:#212b36;"><i class="k13">М</i><i class="km4">а</i><i class="k33">к</i><i class="k7">с</i><i class="k6">и</i><i class="k17">м</i><i class="km4">а</i><i class="km2">л</i><i class="k7">ь</i><i class="k8">н</i><i class="km4">а</i><i class="k2">я</i><i class="km9"> </i><i class="k7">с</i><i class="k33">к</i><i class="k4">о</i><i class="k2">р</i><i class="k4">о</i><i class="k7">с</i><i class="k7">т</i><i class="k7">ь</i><i class="km11">:</i></div>
<div class="t" style="left:309.76px;top:676.17px;font-size:15.80px;color:#212b36;"><i class="k2">9</i><i class="k2">7</i><i class="km4">.</i><i class="k2">0</i><i class="k2">0</i><i class="km9"> </i><i class="k33">к</i><i class="k17">м</i><i class="k43">/</i><i class="k7">ч</i></div>
<div class="t" style="left:18.36px;top:711.77px;font-size:15.80px;color:#212b36;font-weight:400;-webkit-text-stroke:0.32px #212b36;"><i class="k16">Л</i><i class="km6">е</i><i class="k17">г</i><i class="km6">е</i><i class="k6">н</i><i class="k11">д</i><i class="km5">а</i><i class="km9"> </i><i class="k12">т</i><i class="km5">а</i><i class="km3">б</i><i class="km4">л</i><i class="k4">и</i><i class="k9">ц</i><i class="k27">ы</i></div>
<div class="a" style="left:18.00px;top:740.00px;width:37.00px;height:20.00px;background:#e6f2fd;border:1px solid #dcdfe3"></div>
<div class="t" style="left:60.70px;top:742.77px;font-size:15.80px;color:#212b36;"><i class="km23">С</i><i class="k4">о</i><i class="k4">о</i><i class="km6">б</i><i class="k2">щ</i><i class="km8">е</i><i class="k8">н</i><i class="k6">и</i><i class="km8">е</i><i class="km9"> </i><i class="k6">и</i><i class="k16">з</i><i class="km9"> </i><i class="km11">"</i><i class="k7">ч</i><i class="km8">ё</i><i class="k2">р</i><i class="k8">н</i><i class="k4">о</i><i class="k17">г</i><i class="k4">о</i><i class="km9"> </i><i class="k2">я</i><i class="k2">щ</i><i class="k6">и</i><i class="k33">к</i><i class="km4">а</i><i class="km11">"</i><i class="km9"> </i><i class="k3">(</i><i class="k4">о</i><i class="k7">т</i><i class="km9"> </i><i class="k2">2</i><i class="km9"> </i><i class="k6">д</i><i class="k4">о</i><i class="km9"> </i><i class="k2">1</i><i class="k2">0</i><i class="km9"> </i><i class="k17">м</i><i class="k6">и</i><i class="k8">н</i><i class="km4">.</i><i class="k5">)</i></div>
<div class="a" style="left:18.00px;top:772.00px;width:37.00px;height:19.50px;background:#bbdcfa"></div>
<div class="t" style="left:60.70px;top:775.17px;font-size:15.80px;color:#212b36;"><i class="km23">С</i><i class="k4">о</i><i class="k4">о</i><i class="km6">б</i><i class="k2">щ</i><i class="km8">е</i><i class="k8">н</i><i class="k6">и</i><i class="km8">е</i><i class="km9"> </i><i class="k6">и</i><i class="k16">з</i><i class="km9"> </i><i class="km11">"</i><i class="k7">ч</i><i class="km8">ё</i><i class="k2">р</i><i class="k8">н</i><i class="k4">о</i><i class="k17">г</i><i class="k4">о</i><i class="km9"> </i><i class="k2">я</i><i class="k2">щ</i><i class="k6">и</i><i class="k33">к</i><i class="km4">а</i><i class="km11">"</i><i class="km9"> </i><i class="k3">(</i><i class="k4">о</i><i class="k7">т</i><i class="km9"> </i><i class="k2">1</i><i class="k2">0</i><i class="km9"> </i><i class="k6">д</i><i class="k4">о</i><i class="km9"> </i><i class="k2">3</i><i class="k2">0</i><i class="km9"> </i><i class="k17">м</i><i class="k6">и</i><i class="k8">н</i><i class="km4">.</i><i class="k5">)</i></div>
<div class="a" style="left:0.00px;top:957.00px;width:619.00px;height:1.00px;background:#e3e3e3"></div>
<div class="t" style="left:13.69px;top:966.17px;font-size:15.80px;color:#212b36;font-weight:400;-webkit-text-stroke:0.32px #212b36;"><i class="km19">Э</i><i class="k36">к</i><i class="k7">с</i><i class="k9">п</i><i class="k4">о</i><i class="k2">р</i><i class="k12">т</i><i class="km9"> </i><i class="k4">и</i><i class="km9"> </i><i class="k4">и</i><i class="k20">м</i><i class="k9">п</i><i class="k4">о</i><i class="k2">р</i><i class="k12">т</i><i class="km9"> </i><i class="k7">с</i><i class="k4">о</i><i class="k4">о</i><i class="km3">б</i><i class="k14">щ</i><i class="km6">е</i><i class="k6">н</i><i class="k4">и</i><i class="k4">й</i></div>
<svg style="left:590.00px;top:970.50px" width="11" height="7" viewBox="0 0 11 7"><path d="M0.8 1 L5.5 5.5 L10.2 1" fill="none" stroke="#212b36" stroke-width="1.5"/></svg>
<div class="a" style="left:620px;top:150px;width:1300px;height:285px;background:#eceeeb;overflow:hidden">
<svg style="left:0;top:0" width="1300" height="285" viewBox="620 150 1300 285"><polygon points="1605.5,341.4 1613,331.6 1808.7,347.3 1815.3,357 1806.7,368 1611.4,353" fill="#bcd8b4"/><polyline points="680,214 650,275 615,340" fill="none" stroke="#bfc1d6" stroke-width="11"/><polyline points="680,214 650,275 615,340" fill="none" stroke="#f6f6f6" stroke-width="8.5"/><polyline points="1212,259 1243,287 1300,289 1322,274" fill="none" stroke="#b6b8cc" stroke-width="3.5"/><polyline points="1212,259 1243,287 1300,289 1322,274" fill="none" stroke="#eeeef3" stroke-width="2"/><polyline points="737,150 712,170 689,189 683,206" fill="none" stroke="#97918a" stroke-width="1.6" stroke-dasharray="4 3"/><line x1="1026.3" y1="230" x2="1040.6" y2="253" stroke="#a9d1fa" stroke-width="8.5" stroke-linecap="round"/><line x1="1381" y1="250" x2="1392.5" y2="288" stroke="#a9d1fa" stroke-width="8.5" stroke-linecap="round"/><line x1="1857" y1="295.5" x2="1857.4" y2="316" stroke="#a9d1fa" stroke-width="8.5" stroke-linecap="round"/><polyline points="620.0,209.5 840.0,226.0 1000.0,239.2 1120.0,249.4 1420.0,273.0 1660.0,291.5 1920.0,310.4" fill="none" stroke="#a8aac5" stroke-width="16"/><polyline points="620.0,209.5 840.0,226.0 1000.0,239.2 1120.0,249.4 1420.0,273.0 1660.0,291.5 1920.0,310.4" fill="none" stroke="#d9dae6" stroke-width="13.6"/><rect x="600" y="201.0" width="32" height="15.8" fill="#a3a7c3"/><text x="602.5" y="212.5" font-size="10.5" font-weight="700" fill="#c2c5d9" font-family="Liberation Sans" textLength="27">P-255</text><rect x="891.3" y="226.5" width="31.5" height="14.3" fill="#a3a7c3"/><text x="893.8" y="238.0" font-size="10.5" font-weight="700" fill="#c2c5d9" font-family="Liberation Sans" textLength="26.5">P-255</text><rect x="1182" y="250.5" width="31" height="14.3" fill="#a3a7c3"/><text x="1184.5" y="262.0" font-size="10.5" font-weight="700" fill="#c2c5d9" font-family="Liberation Sans" textLength="26">P-255</text><rect x="1472.7" y="273.3" width="31.5" height="14.3" fill="#a3a7c3"/><text x="1475.2" y="284.8" font-size="10.5" font-weight="700" fill="#c2c5d9" font-family="Liberation Sans" textLength="26.5">P-255</text><rect x="1763" y="295.1" width="31.5" height="14.3" fill="#a3a7c3"/><text x="1765.5" y="306.6" font-size="10.5" font-weight="700" fill="#c2c5d9" font-family="Liberation Sans" textLength="26.5">P-255</text><polyline points="620.0,208.7 840.0,225.2 869.0,227.6" fill="none" stroke="#3c4bc3" stroke-width="3.2"/><polyline points="869.0,227.6 1000.0,238.4 1120.0,248.6 1184.0,253.6" fill="none" stroke="#f23d33" stroke-width="3.2"/><polyline points="1183.7,253.7 1216.9,258.4 1237.9,276.7 1250.0,269.3 1249.4,294.3 1265.6,291.6 1299.5,289.6 1319.8,273.3 1329.3,270.6 1365.8,270.0 1420.0,273.3 1517.7,277.5" fill="none" stroke="#1bc3dc" stroke-width="3.4" stroke-linejoin="round"/><polyline points="1517.7,277.5 1564.5,281.5 1660.0,289.5 1721.0,294.0" fill="none" stroke="#1f9cf2" stroke-width="3.4"/><polyline points="1721.0,294.0 1920.0,310.4" fill="none" stroke="#3c4bc3" stroke-width="3.2"/><circle cx="1237.9" cy="276.7" r="3.6" fill="#1bc3dc"/><circle cx="1250" cy="269.3" r="3.6" fill="#1bc3dc"/><circle cx="1249.4" cy="294.3" r="3.6" fill="#1bc3dc"/><circle cx="1265.6" cy="291.6" r="3.6" fill="#1bc3dc"/><circle cx="1299.5" cy="289.6" r="3.6" fill="#1bc3dc"/><circle cx="1319.8" cy="273.3" r="3.6" fill="#1bc3dc"/><circle cx="1517.7" cy="277.5" r="3.6" fill="#1f9cf2"/><circle cx="1564.5" cy="281.5" r="3.6" fill="#1f9cf2"/><g transform="translate(733.0 218.3) rotate(4.40)"><path d="M-15 -6.2 L0 0 L-15 6.2 L-11 0 Z" fill="#3c4bc3" stroke="#fff" stroke-width="1.2" stroke-linejoin="round"/></g><g transform="translate(1086.0 244.3) rotate(4.40)"><path d="M-15 -6.2 L0 0 L-15 6.2 L-11 0 Z" fill="#f23d33" stroke="#fff" stroke-width="1.2" stroke-linejoin="round"/></g><g transform="translate(1373.0 270.4) rotate(1.00)"><path d="M-15 -6.2 L0 0 L-15 6.2 L-11 0 Z" fill="#1bc3dc" stroke="#fff" stroke-width="1.2" stroke-linejoin="round"/></g><g transform="translate(1724.0 294.3) rotate(4.40)"><path d="M-15 -6.2 L0 0 L-15 6.2 L-11 0 Z" fill="#1f9cf2" stroke="#fff" stroke-width="1.2" stroke-linejoin="round"/></g><circle cx="1269.2" cy="305.9" r="8.1" fill="#fff" stroke="#8f93b8" stroke-width="1.2"/><path d="M1265.9 300 h5.4 v10.8 h-5.4 z" fill="#8a8ca8"/><rect x="1266.9" y="301.2" width="3.4" height="2.4" fill="#fff"/><path d="M1271.3 302.6 L1273.8 305.4 L1272.2 308.4" fill="none" stroke="#8a8ca8" stroke-width="1"/></svg>
<div class="a" style="left:0;top:0;width:1300px;height:6px;background:linear-gradient(#c9cbcb,rgba(236,238,235,0))"></div>
<div class="a" style="left:0;top:0;width:6px;height:285px;background:linear-gradient(90deg,#d0d2d1,rgba(236,238,235,0))"></div>
</div>
<div class="t" style="left:1229.90px;top:317.24px;font-size:11.60px;color:#222;letter-spacing:-0.358px;font-style:italic;text-shadow:0 0 2px #fff,0 0 1px #fff;">Газпромнефть</div>
<div class="a" style="left:664.00px;top:375.00px;width:54.00px;height:2.00px;background:#111"></div>
<div class="a" style="left:716.50px;top:352.00px;width:2.00px;height:24.00px;background:#111"></div>
<div class="a" style="left:685.00px;top:376.00px;width:2.00px;height:23.00px;background:#111"></div>
<div class="t" style="left:666.05px;top:357.83px;font-size:11.50px;color:#1a1a1a;font-weight:400;-webkit-text-stroke:0.32px #1a1a1a;"><i class="k3">0</i><i class="k3">0</i><i class="km7"> </i><i class="k9">m</i></div>
<div class="t" style="left:667.34px;top:382.63px;font-size:11.50px;color:#1a1a1a;font-weight:400;-webkit-text-stroke:0.32px #1a1a1a;"><i class="k17">f</i><i class="k13">t</i></div>
<div class="t" style="left:632.93px;top:404.61px;font-size:11.40px;color:#2a2a2a;font-weight:400;-webkit-text-stroke:0.32px #2a2a2a;"><i class="k11">©</i><i class="km7"> </i><i class="km20">O</i><i class="k1">p</i><i class="km5">e</i>n<i class="km14">S</i><i class="k13">t</i><i class="k5">r</i><i class="km5">e</i><i class="km5">e</i><i class="k13">t</i><i class="k9">M</i><i class="km4">a</i><i class="k1">p</i><i class="km7"> </i><i class="k5">c</i><i class="k3">o</i>n<i class="k13">t</i><i class="k5">r</i><i class="k7">i</i><i class="k1">b</i>u<i class="k13">t</i><i class="k3">o</i><i class="k5">r</i><i class="k3">s</i></div>
<div class="t" style="left:1742.96px;top:404.53px;font-size:11.50px;color:#2a2a2a;font-weight:400;-webkit-text-stroke:0.32px #2a2a2a;"><i class="km3">N</i><i class="km7"> </i><i class="k3">5</i><i class="k3">5</i><i class="km4">°</i><i class="km7"> </i><i class="k3">2</i><i class="k3">1</i>.<i class="k3">3</i><i class="k3">5</i><i class="k3">1</i><i class="k3">7</i><i class="km5">'</i><i class="km7"> </i><i class="km3">:</i><i class="km7"> </i><i class="km23">E</i><i class="km7"> </i><i class="k3">0</i><i class="k3">8</i><i class="k3">5</i><i class="km4">°</i><i class="km7"> </i><i class="k3">2</i><i class="k3">7</i>.<i class="k3">4</i><i class="k3">5</i><i class="k3">5</i><i class="k3">8</i><i class="km5">'</i></div>
<div class="a" style="left:632.00px;top:163.00px;width:32.00px;height:32.00px;background:#fff;border-radius:6px;box-shadow:0 0 7px rgba(0,0,0,0.16)"></div>
<div class="a" style="left:632.00px;top:204.00px;width:32.00px;height:63.00px;background:#fff;border-radius:6px;box-shadow:0 0 7px rgba(0,0,0,0.16)"></div>
<div class="a" style="left:632.00px;top:280.00px;width:32.00px;height:125.50px;background:#fff;border-radius:6px;box-shadow:0 0 7px rgba(0,0,0,0.16)"></div>
<svg style="left:641.00px;top:172.00px" width="15" height="15" viewBox="0 0 15 15"><circle cx="6" cy="6" r="5" fill="none" stroke="#4d5563" stroke-width="1.5"/><path d="M9.8 9.8 L14 14" fill="none" stroke="#4d5563" stroke-width="1.5"/></svg>
<svg style="left:639.50px;top:212.00px" width="18" height="12" viewBox="0 0 18 12"><path d="M1 6 C4 1 14 1 17 6 C14 11 4 11 1 6 Z" fill="none" stroke="#4d5563" stroke-width="1.5"/><circle cx="9" cy="5.5" r="2.6" fill="#4d5563"/></svg>
<svg style="left:640.00px;top:244.00px" width="17" height="15" viewBox="0 0 17 15"><path d="M1 3 L5.5 1 L11 3 L16 1 V12.5 L11 14.5 L5.5 12.5 L1 14.5 Z M5.5 1 V12.5 M11 3 V14.5" fill="none" stroke="#4d5563" stroke-width="1.5"/></svg>
<svg style="left:638.50px;top:286.00px" width="20" height="20" viewBox="0 0 20 20"><path d="M4 4 H16 M6.5 1.5 L4 4 L6.5 6.5 M13.5 1.5 L16 4 L13.5 6.5" fill="none" stroke="#4d5563" stroke-width="1.5"/><rect x="1" y="9.5" width="18" height="9" rx="1.5" fill="none" stroke="#4d5563" stroke-width="1.8"/><path d="M5 9.5 V13 M8 9.5 V12 M11 9.5 V13 M14 9.5 V12" fill="none" stroke="#4d5563" stroke-width="1.5"/></svg>
<svg style="left:639.00px;top:317.00px" width="18" height="20" viewBox="0 0 18 20"><circle cx="15" cy="3" r="2.2" fill="none" stroke="#4d5563" stroke-width="1.5"/><circle cx="3" cy="17" r="2.2" fill="none" stroke="#4d5563" stroke-width="1.5"/><path d="M12.8 3 H6 C3.5 3 2 4.6 2 6.6 C2 8.6 3.5 10 6 10 H12 C14.5 10 16 11.5 16 13.5 C16 15.5 14.5 17 12 17 H5.2" fill="none" stroke="#4d5563" stroke-width="1.5"/><circle cx="9" cy="10" r="1.3" fill="#4d5563"/></svg>
<svg style="left:638.00px;top:350.00px" width="20" height="19" viewBox="0 0 20 19"><path d="M4 10 C4 10 1 6.5 1 4.2 C1 2.3 2.3 1 4 1 C5.7 1 7 2.3 7 4.2 C7 6.5 4 10 4 10 Z M15 10 C15 10 12 6.5 12 4.2 C12 2.3 13.3 1 15 1 C16.7 1 18 2.3 18 4.2 C18 6.5 15 10 15 10 Z" fill="none" stroke="#4d5563" stroke-width="1.5"/><circle cx="4" cy="4" r="1" fill="none" stroke="#4d5563" stroke-width="1.5"/><circle cx="15" cy="4" r="1" fill="none" stroke="#4d5563" stroke-width="1.5"/><circle cx="3" cy="16" r="2.2" fill="none" stroke="#4d5563" stroke-width="1.5"/><circle cx="16" cy="16" r="2.2" fill="none" stroke="#4d5563" stroke-width="1.5"/><path d="M5.2 16 H13.8" fill="none" stroke="#4d5563" stroke-width="1.5"/></svg>
<svg style="left:645.00px;top:384.00px" width="8" height="12" viewBox="0 0 8 12"><path d="M1 1 L6.5 6 L1 11" fill="none" stroke="#4d5563" stroke-width="1.7"/></svg>
<div class="a" style="left:1866.00px;top:260.00px;width:32.00px;height:64.00px;background:#fff;border-radius:6px;box-shadow:0 0 7px rgba(0,0,0,0.16)"></div>
<div class="a" style="left:1866.00px;top:292.00px;width:32.00px;height:1.00px;background:#e5e5e5"></div>
<svg style="left:1874.00px;top:268.00px" width="16" height="16" viewBox="0 0 16 16"><path d="M8 0.5 V15.5 M0.5 8 H15.5" stroke="#4d5563" stroke-width="1.8"/></svg>
<svg style="left:1874.00px;top:309.00px" width="16" height="2" viewBox="0 0 16 2"><path d="M0.5 1 H15.5" stroke="#4d5563" stroke-width="2"/></svg>
<div class="a" style="left:620.00px;top:435.00px;width:1300.00px;height:555.00px;background:#fff"></div>
<div class="t" style="left:638.16px;top:453.60px;font-size:15.30px;color:#48505c;"><i class="km4">Т</i><i class="km4">а</i><i class="km6">б</i><i class="km2">л</i><i class="k6">и</i><i class="k6">ц</i><i class="km4">а</i></div>
<div class="t" style="left:737.54px;top:453.60px;font-size:15.30px;color:#48505c;"><i class="k4">Г</i><i class="k2">р</i><i class="km4">а</i><i class="km30">ф</i><i class="k6">и</i><i class="k32">к</i></div>
<div class="a" style="left:620px;top:523px;width:1280px;height:426px;overflow:hidden">
<div class="a" style="left:0;top:-17.07px;width:820px;height:31.575px;background:#fff"></div>
<div class="t" style="left:8.3px;top:-9.40px;font-size:15.8px;color:#212b36"><i class="k2">2</i><i class="k2">5</i><i class="km4">.</i><i class="k2">0</i><i class="k2">3</i><i class="km4">.</i><i class="k2">2</i><i class="k2">0</i><i class="k2">2</i><i class="k2">4</i><i class="km9"> </i><i class="k2">1</i><i class="k2">0</i><i class="km11">:</i><i class="k2">2</i><i class="k2">1</i><i class="km11">:</i><i class="k2">3</i><i class="k2">1</i></div>
<div class="t" style="left:173.5px;top:-9.40px;font-size:15.8px;color:#212b36"><i class="km18">-</i><i class="km18">-</i><i class="km18">-</i></div>
<div class="t" style="left:305px;top:-10.47px;width:459.5px;overflow:hidden;font-size:15.8px;color:#212b36;line-height:19px"><span style="display:inline-block;height:19px;line-height:19px;background:#1eb83a;color:#fff;border-radius:3px;padding:0 1.5px 0 1.5px;font-size:16px"><i class="k5">s</i><i class="k2">p</i><i class="km1">n</i><i class="km34">_</i><i class="k2">1</i><i class="k2">0</i><i class="k2">9</i><i class="k2">0</i><i class="k2">4</i><i class="km34">_</i><i class="k2">0</i><i class="km11">=</i><i class="k2">0</i></span><i class="km26">,</i><i class="km9"> </i><span style="display:inline-block;height:19px;line-height:19px;background:#2e9be2;color:#fff;border-radius:3px;padding:0 1.5px 0 1.5px;font-size:16px"><i class="k5">s</i><i class="k2">p</i><i class="km1">n</i><i class="km34">_</i><i class="k2">1</i><i class="k2">0</i><i class="k2">1</i><i class="k2">9</i><i class="k2">0</i><i class="km34">_</i><i class="k2">0</i><i class="km11">=</i><i class="k2">6</i><i class="k2">4</i><i class="k2">9</i><i class="km5">.</i><i class="k2">3</i><i class="k2">7</i><i class="k2">5</i></span><i class="km26">,</i><i class="km9"> </i><i class="k14">m</i><i class="k7">i</i><i class="k7">l</i><i class="k7">l</i><i class="k7">i</i><i class="k5">s</i><i class="km8">e</i><i class="k7">c</i><i class="km11">=</i><i class="k2">1</i><i class="k2">0</i><i class="km26">,</i><i class="km9"> </i><i class="km2">h</i><i class="k2">d</i><i class="k4">o</i><i class="k2">p</i><i class="km11">=</i><i class="k2">0</i><i class="km26">,</i><i class="km9"> </i><i class="k2">p</i><i class="k9">w</i><i class="k2">r</i><i class="km33">_</i><i class="km8">e</i><i class="km1">x</i><i class="k16">t</i><i class="km11">=</i><i class="k2">2</i><i class="k2">6</i><i class="km4">.</i><i class="k2">5</i></div>
<div class="a" style="left:786px;top:-8.27px;width:14px;height:14px;border:1.3px solid #5a5f66;border-radius:2px;background:#fff"></div>
<div class="a" style="left:0;top:14.50px;width:820px;height:31.575px;background:#f5f5f5"></div>
<div class="t" style="left:8.3px;top:22.17px;font-size:15.8px;color:#212b36"><i class="k2">2</i><i class="k2">5</i><i class="km4">.</i><i class="k2">0</i><i class="k2">3</i><i class="km4">.</i><i class="k2">2</i><i class="k2">0</i><i class="k2">2</i><i class="k2">4</i><i class="km9"> </i><i class="k2">1</i><i class="k2">0</i><i class="km11">:</i><i class="k2">2</i><i class="k2">1</i><i class="km11">:</i><i class="k2">5</i><i class="k2">1</i></div>
<div class="t" style="left:173.5px;top:22.17px;font-size:15.8px;color:#212b36"><i class="km18">-</i><i class="km18">-</i><i class="km18">-</i></div>
<div class="t" style="left:305px;top:21.10px;width:459.5px;overflow:hidden;font-size:15.8px;color:#212b36;line-height:19px"><span style="display:inline-block;height:19px;line-height:19px;background:#1eb83a;color:#fff;border-radius:3px;padding:0 1.5px 0 1.5px;font-size:16px"><i class="k5">s</i><i class="k2">p</i><i class="km1">n</i><i class="km34">_</i><i class="k2">1</i><i class="k2">0</i><i class="k2">9</i><i class="k2">0</i><i class="k2">4</i><i class="km34">_</i><i class="k2">0</i><i class="km11">=</i><i class="k2">0</i></span><i class="km26">,</i><i class="km9"> </i><span style="display:inline-block;height:19px;line-height:19px;background:#2e9be2;color:#fff;border-radius:3px;padding:0 1.5px 0 1.5px;font-size:16px"><i class="k5">s</i><i class="k2">p</i><i class="km1">n</i><i class="km34">_</i><i class="k2">1</i><i class="k2">0</i><i class="k2">1</i><i class="k2">9</i><i class="k2">0</i><i class="km34">_</i><i class="k2">0</i><i class="km11">=</i><i class="k2">6</i><i class="k2">5</i><i class="k2">0</i><i class="km5">.</i><i class="k2">5</i></span><i class="km26">,</i><i class="km9"> </i><i class="k14">m</i><i class="k7">i</i><i class="k7">l</i><i class="k7">l</i><i class="k7">i</i><i class="k5">s</i><i class="km8">e</i><i class="k7">c</i><i class="km11">=</i><i class="k2">1</i><i class="k2">0</i><i class="km26">,</i><i class="km9"> </i><i class="km2">h</i><i class="k2">d</i><i class="k4">o</i><i class="k2">p</i><i class="km11">=</i><i class="k2">0</i><i class="km26">,</i><i class="km9"> </i><i class="k2">p</i><i class="k9">w</i><i class="k2">r</i><i class="km33">_</i><i class="km8">e</i><i class="km1">x</i><i class="k16">t</i><i class="km11">=</i><i class="k2">2</i><i class="k2">6</i><i class="km4">.</i><i class="k2">5</i></div>
<div class="a" style="left:786px;top:23.30px;width:14px;height:14px;border:1.3px solid #5a5f66;border-radius:2px;background:#fff"></div>
<div class="a" style="left:0;top:46.08px;width:820px;height:31.575px;background:#fff"></div>
<div class="t" style="left:8.3px;top:53.75px;font-size:15.8px;color:#212b36"><i class="k2">2</i><i class="k2">5</i><i class="km4">.</i><i class="k2">0</i><i class="k2">3</i><i class="km4">.</i><i class="k2">2</i><i class="k2">0</i><i class="k2">2</i><i class="k2">4</i><i class="km9"> </i><i class="k2">1</i><i class="k2">0</i><i class="km11">:</i><i class="k2">2</i><i class="k2">2</i><i class="km11">:</i><i class="k2">1</i><i class="k2">1</i></div>
<div class="t" style="left:173.5px;top:53.75px;font-size:15.8px;color:#212b36"><i class="km18">-</i><i class="km18">-</i><i class="km18">-</i></div>
<div class="t" style="left:305px;top:52.68px;width:459.5px;overflow:hidden;font-size:15.8px;color:#212b36;line-height:19px"><span style="display:inline-block;height:19px;line-height:19px;background:#1eb83a;color:#fff;border-radius:3px;padding:0 1.5px 0 1.5px;font-size:16px"><i class="k5">s</i><i class="k2">p</i><i class="km1">n</i><i class="km34">_</i><i class="k2">1</i><i class="k2">0</i><i class="k2">9</i><i class="k2">0</i><i class="k2">4</i><i class="km34">_</i><i class="k2">0</i><i class="km11">=</i><i class="k2">0</i></span><i class="km26">,</i><i class="km9"> </i><span style="display:inline-block;height:19px;line-height:19px;background:#2e9be2;color:#fff;border-radius:3px;padding:0 1.5px 0 1.5px;font-size:16px"><i class="k5">s</i><i class="k2">p</i><i class="km1">n</i><i class="km34">_</i><i class="k2">1</i><i class="k2">0</i><i class="k2">1</i><i class="k2">9</i><i class="k2">0</i><i class="km34">_</i><i class="k2">0</i><i class="km11">=</i><i class="k2">6</i><i class="k2">4</i><i class="k2">8</i><i class="km5">.</i><i class="k2">3</i><i class="k2">7</i><i class="k2">5</i></span><i class="km26">,</i><i class="km9"> </i><i class="k14">m</i><i class="k7">i</i><i class="k7">l</i><i class="k7">l</i><i class="k7">i</i><i class="k5">s</i><i class="km8">e</i><i class="k7">c</i><i class="km11">=</i><i class="k2">5</i><i class="km26">,</i><i class="km9"> </i><i class="km2">h</i><i class="k2">d</i><i class="k4">o</i><i class="k2">p</i><i class="km11">=</i><i class="k2">0</i><i class="km26">,</i><i class="km9"> </i><i class="k2">p</i><i class="k9">w</i><i class="k2">r</i><i class="km33">_</i><i class="km8">e</i><i class="km1">x</i><i class="k16">t</i><i class="km11">=</i><i class="k2">2</i><i class="k2">6</i><i class="km4">.</i><i class="k2">5</i></div>
<div class="a" style="left:786px;top:54.88px;width:14px;height:14px;border:1.3px solid #5a5f66;border-radius:2px;background:#fff"></div>
<div class="a" style="left:0;top:77.65px;width:820px;height:31.575px;background:#f5f5f5"></div>
<div class="t" style="left:8.3px;top:85.32px;font-size:15.8px;color:#212b36"><i class="k2">2</i><i class="k2">5</i><i class="km4">.</i><i class="k2">0</i><i class="k2">3</i><i class="km4">.</i><i class="k2">2</i><i class="k2">0</i><i class="k2">2</i><i class="k2">4</i><i class="km9"> </i><i class="k2">1</i><i class="k2">0</i><i class="km11">:</i><i class="k2">2</i><i class="k2">2</i><i class="km11">:</i><i class="k2">3</i><i class="k2">1</i></div>
<div class="t" style="left:173.5px;top:85.32px;font-size:15.8px;color:#212b36"><i class="km18">-</i><i class="km18">-</i><i class="km18">-</i></div>
<div class="t" style="left:305px;top:84.25px;width:459.5px;overflow:hidden;font-size:15.8px;color:#212b36;line-height:19px"><span style="display:inline-block;height:19px;line-height:19px;background:#1eb83a;color:#fff;border-radius:3px;padding:0 1.5px 0 1.5px;font-size:16px"><i class="k5">s</i><i class="k2">p</i><i class="km1">n</i><i class="km34">_</i><i class="k2">1</i><i class="k2">0</i><i class="k2">9</i><i class="k2">0</i><i class="k2">4</i><i class="km34">_</i><i class="k2">0</i><i class="km11">=</i><i class="k2">0</i></span><i class="km26">,</i><i class="km9"> </i><span style="display:inline-block;height:19px;line-height:19px;background:#2e9be2;color:#fff;border-radius:3px;padding:0 1.5px 0 1.5px;font-size:16px"><i class="k5">s</i><i class="k2">p</i><i class="km1">n</i><i class="km34">_</i><i class="k2">1</i><i class="k2">0</i><i class="k2">1</i><i class="k2">9</i><i class="k2">0</i><i class="km34">_</i><i class="k2">0</i><i class="km11">=</i><i class="k2">6</i><i class="k2">5</i><i class="k2">0</i><i class="km5">.</i><i class="k2">6</i><i class="k2">2</i><i class="k2">5</i></span><i class="km26">,</i><i class="km9"> </i><i class="k14">m</i><i class="k7">i</i><i class="k7">l</i><i class="k7">l</i><i class="k7">i</i><i class="k5">s</i><i class="km8">e</i><i class="k7">c</i><i class="km11">=</i><i class="k2">2</i><i class="k2">4</i><i class="km26">,</i><i class="km9"> </i><i class="km2">h</i><i class="k2">d</i><i class="k4">o</i><i class="k2">p</i><i class="km11">=</i><i class="k2">0</i><i class="km26">,</i><i class="km9"> </i><i class="k2">p</i><i class="k9">w</i><i class="k2">r</i><i class="km33">_</i><i class="km8">e</i><i class="km1">x</i><i class="k16">t</i><i class="km11">=</i><i class="k2">2</i><i class="k2">6</i><i class="km4">.</i><i class="k2">5</i></div>
<div class="a" style="left:786px;top:86.45px;width:14px;height:14px;border:1.3px solid #5a5f66;border-radius:2px;background:#fff"></div>
<div class="a" style="left:0;top:109.23px;width:820px;height:31.575px;background:#fff"></div>
<div class="t" style="left:8.3px;top:116.90px;font-size:15.8px;color:#212b36"><i class="k2">2</i><i class="k2">5</i><i class="km4">.</i><i class="k2">0</i><i class="k2">3</i><i class="km4">.</i><i class="k2">2</i><i class="k2">0</i><i class="k2">2</i><i class="k2">4</i><i class="km9"> </i><i class="k2">1</i><i class="k2">0</i><i class="km11">:</i><i class="k2">2</i><i class="k2">2</i><i class="km11">:</i><i class="k2">5</i><i class="k2">1</i></div>
<div class="t" style="left:173.5px;top:116.90px;font-size:15.8px;color:#212b36"><i class="km18">-</i><i class="km18">-</i><i class="km18">-</i></div>
<div class="t" style="left:305px;top:115.83px;width:459.5px;overflow:hidden;font-size:15.8px;color:#212b36;line-height:19px"><span style="display:inline-block;height:19px;line-height:19px;background:#1eb83a;color:#fff;border-radius:3px;padding:0 1.5px 0 1.5px;font-size:16px"><i class="k5">s</i><i class="k2">p</i><i class="km1">n</i><i class="km34">_</i><i class="k2">1</i><i class="k2">0</i><i class="k2">9</i><i class="k2">0</i><i class="k2">4</i><i class="km34">_</i><i class="k2">0</i><i class="km11">=</i><i class="k2">0</i></span><i class="km26">,</i><i class="km9"> </i><span style="display:inline-block;height:19px;line-height:19px;background:#2e9be2;color:#fff;border-radius:3px;padding:0 1.5px 0 1.5px;font-size:16px"><i class="k5">s</i><i class="k2">p</i><i class="km1">n</i><i class="km34">_</i><i class="k2">1</i><i class="k2">0</i><i class="k2">1</i><i class="k2">9</i><i class="k2">0</i><i class="km34">_</i><i class="k2">0</i><i class="km11">=</i><i class="k2">6</i><i class="k2">5</i><i class="k2">0</i><i class="km5">.</i><i class="k2">5</i></span><i class="km26">,</i><i class="km9"> </i><i class="k14">m</i><i class="k7">i</i><i class="k7">l</i><i class="k7">l</i><i class="k7">i</i><i class="k5">s</i><i class="km8">e</i><i class="k7">c</i><i class="km11">=</i><i class="k2">2</i><i class="k2">0</i><i class="km26">,</i><i class="km9"> </i><i class="km2">h</i><i class="k2">d</i><i class="k4">o</i><i class="k2">p</i><i class="km11">=</i><i class="k2">0</i><i class="km26">,</i><i class="km9"> </i><i class="k2">p</i><i class="k9">w</i><i class="k2">r</i><i class="km33">_</i><i class="km8">e</i><i class="km1">x</i><i class="k16">t</i><i class="km11">=</i><i class="k2">2</i><i class="k2">6</i><i class="km4">.</i><i class="k2">5</i></div>
<div class="a" style="left:786px;top:118.03px;width:14px;height:14px;border:1.3px solid #5a5f66;border-radius:2px;background:#fff"></div>
<div class="a" style="left:0;top:140.80px;width:820px;height:31.575px;background:#f5f5f5"></div>
<div class="t" style="left:8.3px;top:148.47px;font-size:15.8px;color:#212b36"><i class="k2">2</i><i class="k2">5</i><i class="km4">.</i><i class="k2">0</i><i class="k2">3</i><i class="km4">.</i><i class="k2">2</i><i class="k2">0</i><i class="k2">2</i><i class="k2">4</i><i class="km9"> </i><i class="k2">1</i><i class="k2">0</i><i class="km11">:</i><i class="k2">2</i><i class="k2">3</i><i class="km11">:</i><i class="k2">1</i><i class="k2">1</i></div>
<div class="t" style="left:173.5px;top:148.47px;font-size:15.8px;color:#212b36"><i class="km18">-</i><i class="km18">-</i><i class="km18">-</i></div>
<div class="t" style="left:305px;top:147.40px;width:459.5px;overflow:hidden;font-size:15.8px;color:#212b36;line-height:19px"><span style="display:inline-block;height:19px;line-height:19px;background:#1eb83a;color:#fff;border-radius:3px;padding:0 1.5px 0 1.5px;font-size:16px"><i class="k5">s</i><i class="k2">p</i><i class="km1">n</i><i class="km34">_</i><i class="k2">1</i><i class="k2">0</i><i class="k2">9</i><i class="k2">0</i><i class="k2">4</i><i class="km34">_</i><i class="k2">0</i><i class="km11">=</i><i class="k2">0</i></span><i class="km26">,</i><i class="km9"> </i><span style="display:inline-block;height:19px;line-height:19px;background:#2e9be2;color:#fff;border-radius:3px;padding:0 1.5px 0 1.5px;font-size:16px"><i class="k5">s</i><i class="k2">p</i><i class="km1">n</i><i class="km34">_</i><i class="k2">1</i><i class="k2">0</i><i class="k2">1</i><i class="k2">9</i><i class="k2">0</i><i class="km34">_</i><i class="k2">0</i><i class="km11">=</i><i class="k2">6</i><i class="k2">4</i><i class="k2">7</i><i class="km5">.</i><i class="k2">7</i><i class="k2">5</i></span><i class="km26">,</i><i class="km9"> </i><i class="k14">m</i><i class="k7">i</i><i class="k7">l</i><i class="k7">l</i><i class="k7">i</i><i class="k5">s</i><i class="km8">e</i><i class="k7">c</i><i class="km11">=</i><i class="k2">1</i><i class="k2">6</i><i class="km26">,</i><i class="km9"> </i><i class="km2">h</i><i class="k2">d</i><i class="k4">o</i><i class="k2">p</i><i class="km11">=</i><i class="k2">0</i><i class="km26">,</i><i class="km9"> </i><i class="k2">p</i><i class="k9">w</i><i class="k2">r</i><i class="km33">_</i><i class="km8">e</i><i class="km1">x</i><i class="k16">t</i><i class="km11">=</i><i class="k2">2</i><i class="k2">6</i><i class="km4">.</i><i class="k2">5</i></div>
<div class="a" style="left:786px;top:149.60px;width:14px;height:14px;border:1.3px solid #5a5f66;border-radius:2px;background:#fff"></div>
<div class="a" style="left:0;top:172.38px;width:820px;height:31.575px;background:#fff"></div>
<div class="t" style="left:8.3px;top:180.04px;font-size:15.8px;color:#212b36"><i class="k2">2</i><i class="k2">5</i><i class="km4">.</i><i class="k2">0</i><i class="k2">3</i><i class="km4">.</i><i class="k2">2</i><i class="k2">0</i><i class="k2">2</i><i class="k2">4</i><i class="km9"> </i><i class="k2">1</i><i class="k2">0</i><i class="km11">:</i><i class="k2">2</i><i class="k2">3</i><i class="km11">:</i><i class="k2">3</i><i class="k2">1</i></div>
<div class="t" style="left:173.5px;top:180.04px;font-size:15.8px;color:#212b36"><i class="km18">-</i><i class="km18">-</i><i class="km18">-</i></div>
<div class="t" style="left:305px;top:178.97px;width:459.5px;overflow:hidden;font-size:15.8px;color:#212b36;line-height:19px"><span style="display:inline-block;height:19px;line-height:19px;background:#1eb83a;color:#fff;border-radius:3px;padding:0 1.5px 0 1.5px;font-size:16px"><i class="k5">s</i><i class="k2">p</i><i class="km1">n</i><i class="km34">_</i><i class="k2">1</i><i class="k2">0</i><i class="k2">9</i><i class="k2">0</i><i class="k2">4</i><i class="km34">_</i><i class="k2">0</i><i class="km11">=</i><i class="k2">0</i></span><i class="km26">,</i><i class="km9"> </i><span style="display:inline-block;height:19px;line-height:19px;background:#2e9be2;color:#fff;border-radius:3px;padding:0 1.5px 0 1.5px;font-size:16px"><i class="k5">s</i><i class="k2">p</i><i class="km1">n</i><i class="km34">_</i><i class="k2">1</i><i class="k2">0</i><i class="k2">1</i><i class="k2">9</i><i class="k2">0</i><i class="km34">_</i><i class="k2">0</i><i class="km11">=</i><i class="k2">6</i><i class="k2">5</i><i class="k2">0</i><i class="km5">.</i><i class="k2">3</i><i class="k2">7</i><i class="k2">5</i></span><i class="km26">,</i><i class="km9"> </i><i class="k14">m</i><i class="k7">i</i><i class="k7">l</i><i class="k7">l</i><i class="k7">i</i><i class="k5">s</i><i class="km8">e</i><i class="k7">c</i><i class="km11">=</i><i class="k2">1</i><i class="k2">0</i><i class="km26">,</i><i class="km9"> </i><i class="km2">h</i><i class="k2">d</i><i class="k4">o</i><i class="k2">p</i><i class="km11">=</i><i class="k2">0</i><i class="km26">,</i><i class="km9"> </i><i class="k2">p</i><i class="k9">w</i><i class="k2">r</i><i class="km33">_</i><i class="km8">e</i><i class="km1">x</i><i class="k16">t</i><i class="km11">=</i><i class="k2">2</i><i class="k2">6</i><i class="km4">.</i><i class="k2">5</i></div>
<div class="a" style="left:786px;top:181.18px;width:14px;height:14px;border:1.3px solid #5a5f66;border-radius:2px;background:#fff"></div>
<div class="a" style="left:0;top:203.95px;width:820px;height:31.575px;background:#f5f5f5"></div>
<div class="t" style="left:8.3px;top:211.62px;font-size:15.8px;color:#212b36"><i class="k2">2</i><i class="k2">5</i><i class="km4">.</i><i class="k2">0</i><i class="k2">3</i><i class="km4">.</i><i class="k2">2</i><i class="k2">0</i><i class="k2">2</i><i class="k2">4</i><i class="km9"> </i><i class="k2">1</i><i class="k2">0</i><i class="km11">:</i><i class="k2">2</i><i class="k2">3</i><i class="km11">:</i><i class="k2">5</i><i class="k2">1</i></div>
<div class="t" style="left:173.5px;top:211.62px;font-size:15.8px;color:#212b36"><i class="km18">-</i><i class="km18">-</i><i class="km18">-</i></div>
<div class="t" style="left:305px;top:210.55px;width:459.5px;overflow:hidden;font-size:15.8px;color:#212b36;line-height:19px"><span style="display:inline-block;height:19px;line-height:19px;background:#1eb83a;color:#fff;border-radius:3px;padding:0 1.5px 0 1.5px;font-size:16px"><i class="k5">s</i><i class="k2">p</i><i class="km1">n</i><i class="km34">_</i><i class="k2">1</i><i class="k2">0</i><i class="k2">9</i><i class="k2">0</i><i class="k2">4</i><i class="km34">_</i><i class="k2">0</i><i class="km11">=</i><i class="k2">0</i></span><i class="km26">,</i><i class="km9"> </i><span style="display:inline-block;height:19px;line-height:19px;background:#2e9be2;color:#fff;border-radius:3px;padding:0 1.5px 0 1.5px;font-size:16px"><i class="k5">s</i><i class="k2">p</i><i class="km1">n</i><i class="km34">_</i><i class="k2">1</i><i class="k2">0</i><i class="k2">1</i><i class="k2">9</i><i class="k2">0</i><i class="km34">_</i><i class="k2">0</i><i class="km11">=</i><i class="k2">6</i><i class="k2">5</i><i class="k2">0</i><i class="km5">.</i><i class="k2">3</i><i class="k2">7</i><i class="k2">5</i></span><i class="km26">,</i><i class="km9"> </i><i class="k14">m</i><i class="k7">i</i><i class="k7">l</i><i class="k7">l</i><i class="k7">i</i><i class="k5">s</i><i class="km8">e</i><i class="k7">c</i><i class="km11">=</i><i class="k2">2</i><i class="km26">,</i><i class="km9"> </i><i class="km2">h</i><i class="k2">d</i><i class="k4">o</i><i class="k2">p</i><i class="km11">=</i><i class="k2">0</i><i class="km26">,</i><i class="km9"> </i><i class="k2">p</i><i class="k9">w</i><i class="k2">r</i><i class="km33">_</i><i class="km8">e</i><i class="km1">x</i><i class="k16">t</i><i class="km11">=</i><i class="k2">2</i><i class="k2">6</i><i class="km4">.</i><i class="k2">5</i></div>
<div class="a" style="left:786px;top:212.75px;width:14px;height:14px;border:1.3px solid #5a5f66;border-radius:2px;background:#fff"></div>
<div class="a" style="left:0;top:235.52px;width:820px;height:31.575px;background:#fff"></div>
<div class="t" style="left:8.3px;top:243.19px;font-size:15.8px;color:#212b36"><i class="k2">2</i><i class="k2">5</i><i class="km4">.</i><i class="k2">0</i><i class="k2">3</i><i class="km4">.</i><i class="k2">2</i><i class="k2">0</i><i class="k2">2</i><i class="k2">4</i><i class="km9"> </i><i class="k2">1</i><i class="k2">0</i><i class="km11">:</i><i class="k2">2</i><i class="k2">4</i><i class="km11">:</i><i class="k2">1</i><i class="k2">1</i></div>
<div class="t" style="left:173.5px;top:243.19px;font-size:15.8px;color:#212b36"><i class="km18">-</i><i class="km18">-</i><i class="km18">-</i></div>
<div class="t" style="left:305px;top:242.12px;width:459.5px;overflow:hidden;font-size:15.8px;color:#212b36;line-height:19px"><span style="display:inline-block;height:19px;line-height:19px;background:#1eb83a;color:#fff;border-radius:3px;padding:0 1.5px 0 1.5px;font-size:16px"><i class="k5">s</i><i class="k2">p</i><i class="km1">n</i><i class="km34">_</i><i class="k2">1</i><i class="k2">0</i><i class="k2">9</i><i class="k2">0</i><i class="k2">4</i><i class="km34">_</i><i class="k2">0</i><i class="km11">=</i><i class="k2">0</i></span><i class="km26">,</i><i class="km9"> </i><span style="display:inline-block;height:19px;line-height:19px;background:#2e9be2;color:#fff;border-radius:3px;padding:0 1.5px 0 1.5px;font-size:16px"><i class="k5">s</i><i class="k2">p</i><i class="km1">n</i><i class="km34">_</i><i class="k2">1</i><i class="k2">0</i><i class="k2">1</i><i class="k2">9</i><i class="k2">0</i><i class="km34">_</i><i class="k2">0</i><i class="km11">=</i><i class="k2">6</i><i class="k2">4</i><i class="k2">9</i></span><i class="km26">,</i><i class="km9"> </i><i class="k14">m</i><i class="k7">i</i><i class="k7">l</i><i class="k7">l</i><i class="k7">i</i><i class="k5">s</i><i class="km8">e</i><i class="k7">c</i><i class="km11">=</i><i class="k2">2</i><i class="k2">0</i><i class="km26">,</i><i class="km9"> </i><i class="km2">h</i><i class="k2">d</i><i class="k4">o</i><i class="k2">p</i><i class="km11">=</i><i class="k2">0</i><i class="km26">,</i><i class="km9"> </i><i class="k2">p</i><i class="k9">w</i><i class="k2">r</i><i class="km33">_</i><i class="km8">e</i><i class="km1">x</i><i class="k16">t</i><i class="km11">=</i><i class="k2">2</i><i class="k2">6</i><i class="km4">.</i><i class="k2">5</i></div>
<div class="a" style="left:786px;top:244.32px;width:14px;height:14px;border:1.3px solid #5a5f66;border-radius:2px;background:#fff"></div>
<div class="a" style="left:0;top:267.10px;width:820px;height:31.575px;background:#f5f5f5"></div>
<div class="t" style="left:8.3px;top:274.77px;font-size:15.8px;color:#212b36"><i class="k2">2</i><i class="k2">5</i><i class="km4">.</i><i class="k2">0</i><i class="k2">3</i><i class="km4">.</i><i class="k2">2</i><i class="k2">0</i><i class="k2">2</i><i class="k2">4</i><i class="km9"> </i><i class="k2">1</i><i class="k2">0</i><i class="km11">:</i><i class="k2">2</i><i class="k2">4</i><i class="km11">:</i><i class="k2">3</i><i class="k2">1</i></div>
<div class="t" style="left:173.5px;top:274.77px;font-size:15.8px;color:#212b36"><i class="km18">-</i><i class="km18">-</i><i class="km18">-</i></div>
<div class="t" style="left:305px;top:273.70px;width:459.5px;overflow:hidden;font-size:15.8px;color:#212b36;line-height:19px"><span style="display:inline-block;height:19px;line-height:19px;background:#1eb83a;color:#fff;border-radius:3px;padding:0 1.5px 0 1.5px;font-size:16px"><i class="k5">s</i><i class="k2">p</i><i class="km1">n</i><i class="km34">_</i><i class="k2">1</i><i class="k2">0</i><i class="k2">9</i><i class="k2">0</i><i class="k2">4</i><i class="km34">_</i><i class="k2">0</i><i class="km11">=</i><i class="k2">0</i></span><i class="km26">,</i><i class="km9"> </i><span style="display:inline-block;height:19px;line-height:19px;background:#2e9be2;color:#fff;border-radius:3px;padding:0 1.5px 0 1.5px;font-size:16px"><i class="k5">s</i><i class="k2">p</i><i class="km1">n</i><i class="km34">_</i><i class="k2">1</i><i class="k2">0</i><i class="k2">1</i><i class="k2">9</i><i class="k2">0</i><i class="km34">_</i><i class="k2">0</i><i class="km11">=</i><i class="k2">6</i><i class="k2">5</i><i class="k2">0</i><i class="km5">.</i><i class="k2">1</i><i class="k2">2</i><i class="k2">5</i></span><i class="km26">,</i><i class="km9"> </i><i class="k14">m</i><i class="k7">i</i><i class="k7">l</i><i class="k7">l</i><i class="k7">i</i><i class="k5">s</i><i class="km8">e</i><i class="k7">c</i><i class="km11">=</i><i class="k2">1</i><i class="k2">3</i><i class="km26">,</i><i class="km9"> </i><i class="km2">h</i><i class="k2">d</i><i class="k4">o</i><i class="k2">p</i><i class="km11">=</i><i class="k2">0</i><i class="km26">,</i><i class="km9"> </i><i class="k2">p</i><i class="k9">w</i><i class="k2">r</i><i class="km33">_</i><i class="km8">e</i><i class="km1">x</i><i class="k16">t</i><i class="km11">=</i><i class="k2">2</i><i class="k2">6</i><i class="km4">.</i><i class="k2">5</i></div>
<div class="a" style="left:786px;top:275.90px;width:14px;height:14px;border:1.3px solid #5a5f66;border-radius:2px;background:#fff"></div>
<div class="a" style="left:0;top:298.67px;width:820px;height:31.575px;background:#fff"></div>
<div class="t" style="left:8.3px;top:306.34px;font-size:15.8px;color:#212b36"><i class="k2">2</i><i class="k2">5</i><i class="km4">.</i><i class="k2">0</i><i class="k2">3</i><i class="km4">.</i><i class="k2">2</i><i class="k2">0</i><i class="k2">2</i><i class="k2">4</i><i class="km9"> </i><i class="k2">1</i><i class="k2">0</i><i class="km11">:</i><i class="k2">2</i><i class="k2">4</i><i class="km11">:</i><i class="k2">5</i><i class="k2">1</i></div>
<div class="t" style="left:173.5px;top:306.34px;font-size:15.8px;color:#212b36"><i class="km18">-</i><i class="km18">-</i><i class="km18">-</i></div>
<div class="t" style="left:305px;top:305.27px;width:459.5px;overflow:hidden;font-size:15.8px;color:#212b36;line-height:19px"><span style="display:inline-block;height:19px;line-height:19px;background:#1eb83a;color:#fff;border-radius:3px;padding:0 1.5px 0 1.5px;font-size:16px"><i class="k5">s</i><i class="k2">p</i><i class="km1">n</i><i class="km34">_</i><i class="k2">1</i><i class="k2">0</i><i class="k2">9</i><i class="k2">0</i><i class="k2">4</i><i class="km34">_</i><i class="k2">0</i><i class="km11">=</i><i class="k2">0</i></span><i class="km26">,</i><i class="km9"> </i><span style="display:inline-block;height:19px;line-height:19px;background:#2e9be2;color:#fff;border-radius:3px;padding:0 1.5px 0 1.5px;font-size:16px"><i class="k5">s</i><i class="k2">p</i><i class="km1">n</i><i class="km34">_</i><i class="k2">1</i><i class="k2">0</i><i class="k2">1</i><i class="k2">9</i><i class="k2">0</i><i class="km34">_</i><i class="k2">0</i><i class="km11">=</i><i class="k2">6</i><i class="k2">5</i><i class="k2">0</i><i class="km5">.</i><i class="k2">7</i><i class="k2">5</i></span><i class="km26">,</i><i class="km9"> </i><i class="k14">m</i><i class="k7">i</i><i class="k7">l</i><i class="k7">l</i><i class="k7">i</i><i class="k5">s</i><i class="km8">e</i><i class="k7">c</i><i class="km11">=</i><i class="k2">6</i><i class="km26">,</i><i class="km9"> </i><i class="km2">h</i><i class="k2">d</i><i class="k4">o</i><i class="k2">p</i><i class="km11">=</i><i class="k2">0</i><i class="km26">,</i><i class="km9"> </i><i class="k2">p</i><i class="k9">w</i><i class="k2">r</i><i class="km33">_</i><i class="km8">e</i><i class="km1">x</i><i class="k16">t</i><i class="km11">=</i><i class="k2">2</i><i class="k2">6</i><i class="km4">.</i><i class="k2">5</i></div>
<div class="a" style="left:786px;top:307.47px;width:14px;height:14px;border:1.3px solid #5a5f66;border-radius:2px;background:#fff"></div>
<div class="a" style="left:0;top:330.25px;width:820px;height:31.575px;background:#f5f5f5"></div>
<div class="t" style="left:8.3px;top:337.92px;font-size:15.8px;color:#212b36"><i class="k2">2</i><i class="k2">5</i><i class="km4">.</i><i class="k2">0</i><i class="k2">3</i><i class="km4">.</i><i class="k2">2</i><i class="k2">0</i><i class="k2">2</i><i class="k2">4</i><i class="km9"> </i><i class="k2">1</i><i class="k2">0</i><i class="km11">:</i><i class="k2">2</i><i class="k2">5</i><i class="km11">:</i><i class="k2">1</i><i class="k2">1</i></div>
<div class="t" style="left:173.5px;top:337.92px;font-size:15.8px;color:#212b36"><i class="km18">-</i><i class="km18">-</i><i class="km18">-</i></div>
<div class="t" style="left:305px;top:336.85px;width:459.5px;overflow:hidden;font-size:15.8px;color:#212b36;line-height:19px"><span style="display:inline-block;height:19px;line-height:19px;background:#1eb83a;color:#fff;border-radius:3px;padding:0 1.5px 0 1.5px;font-size:16px"><i class="k5">s</i><i class="k2">p</i><i class="km1">n</i><i class="km34">_</i><i class="k2">1</i><i class="k2">0</i><i class="k2">9</i><i class="k2">0</i><i class="k2">4</i><i class="km34">_</i><i class="k2">0</i><i class="km11">=</i><i class="k2">0</i></span><i class="km26">,</i><i class="km9"> </i><span style="display:inline-block;height:19px;line-height:19px;background:#2e9be2;color:#fff;border-radius:3px;padding:0 1.5px 0 1.5px;font-size:16px"><i class="k5">s</i><i class="k2">p</i><i class="km1">n</i><i class="km34">_</i><i class="k2">1</i><i class="k2">0</i><i class="k2">1</i><i class="k2">9</i><i class="k2">0</i><i class="km34">_</i><i class="k2">0</i><i class="km11">=</i><i class="k2">6</i><i class="k2">4</i><i class="k2">7</i><i class="km5">.</i><i class="k2">5</i></span><i class="km26">,</i><i class="km9"> </i><i class="k14">m</i><i class="k7">i</i><i class="k7">l</i><i class="k7">l</i><i class="k7">i</i><i class="k5">s</i><i class="km8">e</i><i class="k7">c</i><i class="km11">=</i><i class="k2">6</i><i class="km26">,</i><i class="km9"> </i><i class="km2">h</i><i class="k2">d</i><i class="k4">o</i><i class="k2">p</i><i class="km11">=</i><i class="k2">0</i><i class="km26">,</i><i class="km9"> </i><i class="k2">p</i><i class="k9">w</i><i class="k2">r</i><i class="km33">_</i><i class="km8">e</i><i class="km1">x</i><i class="k16">t</i><i class="km11">=</i><i class="k2">2</i><i class="k2">6</i><i class="km4">.</i><i class="k2">5</i></div>
<div class="a" style="left:786px;top:339.05px;width:14px;height:14px;border:1.3px solid #5a5f66;border-radius:2px;background:#fff"></div>
<div class="a" style="left:0;top:361.83px;width:820px;height:31.575px;background:#fff"></div>
<div class="t" style="left:8.3px;top:369.50px;font-size:15.8px;color:#212b36"><i class="k2">2</i><i class="k2">5</i><i class="km4">.</i><i class="k2">0</i><i class="k2">3</i><i class="km4">.</i><i class="k2">2</i><i class="k2">0</i><i class="k2">2</i><i class="k2">4</i><i class="km9"> </i><i class="k2">1</i><i class="k2">0</i><i class="km11">:</i><i class="k2">2</i><i class="k2">5</i><i class="km11">:</i><i class="k2">1</i><i class="k2">9</i></div>
<div class="t" style="left:173.5px;top:369.50px;font-size:15.8px;color:#212b36"><i class="km18">-</i><i class="km18">-</i><i class="km18">-</i></div>
<div class="t" style="left:305px;top:368.43px;width:459.5px;overflow:hidden;font-size:15.8px;color:#212b36;line-height:19px"><span style="display:inline-block;height:19px;line-height:19px;background:#1eb83a;color:#fff;border-radius:3px;padding:0 1.5px 0 1.5px;font-size:16px"><i class="k5">s</i><i class="k2">p</i><i class="km1">n</i><i class="km34">_</i><i class="k2">1</i><i class="k2">0</i><i class="k2">9</i><i class="k2">0</i><i class="k2">4</i><i class="km34">_</i><i class="k2">0</i><i class="km11">=</i><i class="k2">5</i><i class="km5">.</i><i class="k2">6</i><i class="k2">0</i><i class="k2">9</i><i class="k2">3</i><i class="k2">7</i><i class="k2">5</i></span><i class="km26">,</i><i class="km9"> </i><span style="display:inline-block;height:19px;line-height:19px;background:#2e9be2;color:#fff;border-radius:3px;padding:0 1.5px 0 1.5px;font-size:16px"><i class="k5">s</i><i class="k2">p</i><i class="km1">n</i><i class="km34">_</i><i class="k2">1</i><i class="k2">0</i><i class="k2">1</i><i class="k2">9</i><i class="k2">0</i><i class="km34">_</i><i class="k2">0</i><i class="km11">=</i><i class="k2">9</i><i class="k2">7</i><i class="k2">3</i><i class="km5">.</i><i class="k2">5</i></span><i class="km26">,</i><i class="km9"> </i><i class="k14">m</i><i class="k7">i</i><i class="k7">l</i><i class="k7">l</i><i class="k7">i</i><i class="k5">s</i><i class="km8">e</i><i class="k7">c</i><i class="km11">=</i><i class="k2">8</i><i class="k2">4</i><i class="k2">3</i><i class="km26">,</i><i class="km9"> </i><i class="km2">h</i><i class="k2">d</i><i class="k4">o</i><i class="k2">p</i><i class="km11">=</i><i class="k2">0</i><i class="km26">,</i><i class="km9"> </i><i class="k2">p</i><i class="k9">w</i><i class="k2">r</i><i class="km33">_</i><i class="km8">e</i><i class="km1">x</i><i class="k16">t</i><i class="km11">=</i><i class="k2">2</i><i class="k2">6</i><i class="km4">.</i><i class="k2">5</i></div>
<div class="a" style="left:786px;top:370.63px;width:14px;height:14px;border:1.3px solid #5a5f66;border-radius:2px;background:#fff"></div>
<div class="a" style="left:0;top:393.40px;width:820px;height:31.575px;background:#f5f5f5"></div>
<div class="t" style="left:8.3px;top:401.07px;font-size:15.8px;color:#212b36"><i class="k2">2</i><i class="k2">5</i><i class="km4">.</i><i class="k2">0</i><i class="k2">3</i><i class="km4">.</i><i class="k2">2</i><i class="k2">0</i><i class="k2">2</i><i class="k2">4</i><i class="km9"> </i><i class="k2">1</i><i class="k2">0</i><i class="km11">:</i><i class="k2">2</i><i class="k2">5</i><i class="km11">:</i><i class="k2">3</i><i class="k2">4</i></div>
<div class="t" style="left:173.5px;top:401.07px;font-size:15.8px;color:#212b36"><i class="k2">1</i><i class="k2">2</i></div>
<div class="t" style="left:305px;top:400.00px;width:459.5px;overflow:hidden;font-size:15.8px;color:#212b36;line-height:19px"><span style="display:inline-block;height:19px;line-height:19px;background:#1eb83a;color:#fff;border-radius:3px;padding:0 1.5px 0 1.5px;font-size:16px"><i class="k5">s</i><i class="k2">p</i><i class="km1">n</i><i class="km34">_</i><i class="k2">1</i><i class="k2">0</i><i class="k2">9</i><i class="k2">0</i><i class="k2">4</i><i class="km34">_</i><i class="k2">0</i><i class="km11">=</i><i class="k2">1</i><i class="k2">2</i><i class="km5">.</i><i class="k2">4</i><i class="k2">2</i><i class="k2">1</i><i class="k2">8</i><i class="k2">7</i><i class="k2">5</i></span><i class="km26">,</i><i class="km9"> </i><span style="display:inline-block;height:19px;line-height:19px;background:#2e9be2;color:#fff;border-radius:3px;padding:0 1.5px 0 1.5px;font-size:16px"><i class="k5">s</i><i class="k2">p</i><i class="km1">n</i><i class="km34">_</i><i class="k2">1</i><i class="k2">0</i><i class="k2">1</i><i class="k2">9</i><i class="k2">0</i><i class="km34">_</i><i class="k2">0</i><i class="km11">=</i><i class="k2">9</i><i class="k2">6</i><i class="k2">4</i><i class="km5">.</i><i class="k2">5</i></span><i class="km26">,</i><i class="km9"> </i><i class="k14">m</i><i class="k7">i</i><i class="k7">l</i><i class="k7">l</i><i class="k7">i</i><i class="k5">s</i><i class="km8">e</i><i class="k7">c</i><i class="km11">=</i><i class="k2">3</i><i class="k2">0</i><i class="k2">8</i><i class="km26">,</i><i class="km9"> </i><i class="km2">h</i><i class="k2">d</i><i class="k4">o</i><i class="k2">p</i><i class="km11">=</i><i class="k2">0</i><i class="km26">,</i><i class="km9"> </i><i class="k2">p</i><i class="k9">w</i><i class="k2">r</i><i class="km33">_</i><i class="km8">e</i><i class="km1">x</i><i class="k16">t</i><i class="km11">=</i><i class="k2">2</i><i class="k2">6</i><i class="km4">.</i><i class="k2">5</i></div>
<div class="a" style="left:786px;top:402.20px;width:14px;height:14px;border:1.3px solid #5a5f66;border-radius:2px;background:#fff"></div>
<div class="a" style="left:164px;top:0;width:1px;height:426px;background:#e4e4e4"></div>
<div class="a" style="left:295px;top:0;width:1px;height:426px;background:#e4e4e4"></div>
<div class="a" style="left:764px;top:0;width:1px;height:426px;background:#e4e4e4"></div>
<div class="a" style="left:820px;top:0;width:1px;height:426px;background:#e4e4e4"></div>
</div>
<div class="a" style="left:620.00px;top:489.00px;width:1298.00px;height:35.00px;background:#fff;border-top:1px solid #e0e0e0;border-bottom:1px solid #e0e0e0"></div>
<div class="a" style="left:620.00px;top:490.00px;width:164.00px;height:33.00px;background:#e8e9eb"></div>
<div class="a" style="left:785.00px;top:490.00px;width:712.50px;height:33.00px;background:#f5f5f5"></div>
<div class="a" style="left:1918.00px;top:489.00px;width:1.00px;height:35.00px;background:#e0e0e0"></div>
<div class="a" style="left:784.00px;top:490.00px;width:1.00px;height:33.00px;background:#e2e2e2"></div>
<div class="a" style="left:915.00px;top:490.00px;width:1.00px;height:33.00px;background:#e2e2e2"></div>
<div class="a" style="left:1384.00px;top:490.00px;width:1.00px;height:33.00px;background:#e2e2e2"></div>
<div class="a" style="left:1440.00px;top:490.00px;width:1.00px;height:33.00px;background:#e2e2e2"></div>
<svg style="left:634.30px;top:504.00px" width="6.6" height="3.4" viewBox="0 0 6.6 3.4"><path d="M0 0 H6.6 L3.3 3.4 Z" fill="#212b36"/></svg>
<div class="t" style="left:645.95px;top:497.67px;font-size:15.80px;color:#212b36;font-weight:400;-webkit-text-stroke:0.32px #212b36;"><i class="km11">В</i><i class="k2">р</i><i class="km6">е</i><i class="k20">м</i><i class="k4">я</i></div>
<div class="t" style="left:793.95px;top:497.67px;font-size:15.80px;color:#212b36;font-weight:400;-webkit-text-stroke:0.32px #212b36;"><i class="km22">С</i><i class="k36">к</i><i class="k4">о</i><i class="k2">р</i><i class="k4">о</i><i class="k7">с</i><i class="k12">т</i><i class="k10">ь</i><i class="km17">,</i><i class="km9"> </i><i class="k36">к</i><i class="k20">м</i><i class="k35">/</i><i class="k9">ч</i></div>
<div class="t" style="left:924.72px;top:497.67px;font-size:15.80px;color:#212b36;font-weight:400;-webkit-text-stroke:0.32px #212b36;"><i class="km3">П</i><i class="km5">а</i><i class="k2">р</i><i class="km5">а</i><i class="k20">м</i><i class="km6">е</i><i class="k12">т</i><i class="k2">р</i><i class="k27">ы</i></div>
<div class="a" style="left:1406.00px;top:500.00px;width:14.00px;height:14.00px;border:1.3px solid #5a5f66;border-radius:2px;background:#fff"></div>
<div class="a" style="left:1900.00px;top:523.00px;width:20.00px;height:426.00px;background:#f1f1f1"></div>
<svg style="left:1905.00px;top:533.00px" width="10" height="5" viewBox="0 0 10 5"><path d="M0 5 L5 0 L10 5 Z" fill="#505050"/></svg>
<svg style="left:1905.00px;top:935.00px" width="10" height="5" viewBox="0 0 10 5"><path d="M0 0 L5 5 L10 0 Z" fill="#505050"/></svg>
<div class="a" style="left:1902.00px;top:601.00px;width:17.00px;height:21.00px;background:#c1c1c1"></div>
<div class="a" style="left:620.00px;top:949.00px;width:1300.00px;height:1.00px;background:#e3e3e3"></div>
<svg style="left:631.00px;top:959.00px" width="19" height="20" viewBox="0 0 19 20"><path d="M3 16 H16" stroke="#8a93a0" stroke-width="2"/><path d="M0 16 L3.6 13 V19 Z M19 16 L15.4 13 V19 Z" fill="#4d5563"/></svg>
<div class="t" style="left:636.50px;top:960.62px;font-size:13.50px;color:#2e9be2;">?</div>
<div class="a" style="left:661.00px;top:954.00px;width:81.00px;height:31.50px;border:1px solid #e1e2e5;border-radius:5px;background:#fff"></div>
<div class="t" style="left:670.10px;top:962.87px;font-size:15.80px;color:#48505c;"><i class="k2">1</i><i class="k2">0</i><i class="k2">0</i><i class="k2">0</i></div>
<svg style="left:717.00px;top:967.00px" width="11" height="7" viewBox="0 0 11 7"><path d="M1 1 L5.5 5.5 L10 1" fill="none" stroke="#48505c" stroke-width="1.7"/></svg>
<svg style="left:758.00px;top:963.00px" width="15" height="12" viewBox="0 0 15 12"><path d="M7 1 L2 6 L7 11 M13.5 1 L8.5 6 L13.5 11" fill="none" stroke="#a0a6ae" stroke-width="1.7"/></svg>
<svg style="left:787.00px;top:963.00px" width="8" height="12" viewBox="0 0 8 12"><path d="M7 1 L2 6 L7 11" fill="none" stroke="#a0a6ae" stroke-width="1.7"/></svg>
<div class="t" style="left:805.10px;top:962.87px;font-size:15.80px;color:#48505c;"><i class="km23">С</i><i class="k7">т</i><i class="k2">р</i><i class="km4">.</i></div>
<div class="a" style="left:845.30px;top:954.00px;width:73.50px;height:31.50px;border:1px solid #e4e4e6;border-radius:5px;background:#f3f3f4"></div>
<div class="t" style="left:855.00px;top:962.87px;font-size:15.80px;color:#a0a6ae;"><i class="k2">1</i></div>
<div class="t" style="left:927.40px;top:962.87px;font-size:15.80px;color:#48505c;"><i class="k6">и</i><i class="k16">з</i><i class="km9"> </i><i class="k2">1</i></div>
<svg style="left:973.00px;top:963.00px" width="8" height="12" viewBox="0 0 8 12"><path d="M1 1 L6 6 L1 11" fill="none" stroke="#a0a6ae" stroke-width="1.7"/></svg>
<svg style="left:993.50px;top:963.00px" width="15" height="12" viewBox="0 0 15 12"><path d="M1.5 1 L6.5 6 L1.5 11 M8 1 L13 6 L8 11" fill="none" stroke="#a0a6ae" stroke-width="1.7"/></svg>
<div class="t" style="left:1024.90px;top:962.87px;font-size:15.80px;color:#48505c;"><i class="km3">Н</i><i class="km4">а</i><i class="k6">й</i><i class="k6">д</i><i class="km8">е</i><i class="k8">н</i><i class="k4">о</i><i class="km9"> </i><i class="k2">4</i><i class="k2">6</i><i class="k2">7</i><i class="km9"> </i><i class="k7">с</i><i class="k4">о</i><i class="k4">о</i><i class="km6">б</i><i class="k2">щ</i><i class="km8">е</i><i class="k8">н</i><i class="k6">и</i><i class="k6">й</i></div>
<div class="a" style="left:1221.70px;top:954.50px;width:201.00px;height:31.00px;border:1px solid #e1e2e5;border-radius:5px;background:#fff"></div>
<div class="t" style="left:1231.66px;top:962.87px;font-size:15.80px;color:#212b36;width:183px;overflow:hidden;"><i class="k5">s</i><i class="k2">p</i><i class="km1">n</i><i class="km33">_</i><i class="k2">1</i><i class="k2">0</i><i class="k2">9</i><i class="k2">0</i><i class="k2">4</i><i class="km33">_</i><i class="k2">0</i><i class="km26">,</i><i class="km9"> </i><i class="k5">s</i><i class="k2">p</i><i class="km1">n</i><i class="km33">_</i><i class="k2">1</i><i class="k2">0</i><i class="k2">1</i><i class="k2">9</i><i class="k2">0</i><i class="km33">_</i><i class="k2">0</i></div>
<svg style="left:1434.00px;top:962.00px" width="17" height="16" viewBox="0 0 17 16"><path d="M1 1 H16 L10.2 8 V14.5 L6.8 12.5 V8 Z" fill="none" stroke="#4d5563" stroke-width="1.5" stroke-linejoin="round"/></svg>
<svg style="left:1477.00px;top:965.00px" width="11" height="11" viewBox="0 0 11 11"><path d="M1 1 L10 10 M10 1 L1 10" stroke="#a0a6ae" stroke-width="1.7"/></svg>
<div class="a" style="left:1520.00px;top:963.50px;width:4.00px;height:4.00px;border-radius:2px;background:#4d5563"></div>
<div class="a" style="left:1520.00px;top:969.50px;width:4.00px;height:4.00px;border-radius:2px;background:#4d5563"></div>
<div class="a" style="left:1520.00px;top:975.50px;width:4.00px;height:4.00px;border-radius:2px;background:#4d5563"></div>
<div class="a" style="left:0.00px;top:990.00px;width:1920.00px;height:40.00px;background:#fff"></div>
<div class="a" style="left:0.00px;top:990.00px;width:1920.00px;height:1.00px;background:#e3e3e3"></div>
<svg style="left:23.00px;top:1002.00px" width="18" height="17" viewBox="0 0 18 17"><rect x="0.8" y="0.8" width="16.4" height="15.4" fill="none" stroke="#1b2538" stroke-width="1.6"/><rect x="0.8" y="0.8" width="5.5" height="15.4" fill="#1b2538"/></svg>
<svg style="left:63.00px;top:1003.00px" width="16" height="16" viewBox="0 0 16 16"><rect x="0" y="0" width="4.4" height="4.4" fill="#1b2538"/><rect x="5.8" y="0" width="4.4" height="4.4" fill="#1b2538"/><rect x="11.6" y="0" width="4.4" height="4.4" fill="#1b2538"/><rect x="0" y="5.8" width="4.4" height="4.4" fill="#1b2538"/><rect x="5.8" y="5.8" width="4.4" height="4.4" fill="#1b2538"/><rect x="11.6" y="5.8" width="4.4" height="4.4" fill="#1b2538"/><rect x="0" y="11.6" width="4.4" height="4.4" fill="#1b2538"/><rect x="5.8" y="11.6" width="4.4" height="4.4" fill="#1b2538"/><rect x="11.6" y="11.6" width="4.4" height="4.4" fill="#1b2538"/></svg>
<div class="t" style="left:813.26px;top:1003.17px;font-size:15.80px;color:#48505c;"><i class="k15">©</i><i class="km9"> </i><i class="km31">G</i><i class="km2">u</i><i class="k2">r</i><i class="k16">t</i><i class="km4">a</i><i class="k14">m</i></div>
<svg style="left:1642.00px;top:1004.00px" width="18" height="15" viewBox="0 0 18 15"><rect x="0" y="0" width="18" height="15" fill="#a3a8b0"/><rect x="1.5" y="3" width="15" height="1.4" fill="#fff"/><rect x="3" y="7.5" width="9" height="1.4" fill="#fff"/><rect x="3" y="10.5" width="6" height="1.4" fill="#fff"/></svg>
<svg style="left:1679.00px;top:1004.00px" width="25" height="16" viewBox="0 0 25 16"><path d="M0 0 H17 V7 L13 10 V12 H0 Z" fill="#a3a8b0"/><path d="M1 1 L8.5 6.5 L16 1" fill="none" stroke="#fff" stroke-width="1.4"/><path d="M19 6 L15.5 7.5 L19 9 Z M16 7.5 H24.5" fill="#a3a8b0" stroke="#a3a8b0" stroke-width="1.6"/><path d="M20 12 L23.5 13.5 L20 15 Z M12 13.5 H21" fill="#a3a8b0" stroke="#a3a8b0" stroke-width="1.6"/></svg>
<svg style="left:1723.00px;top:1004.00px" width="18" height="16" viewBox="0 0 18 16"><rect x="0" y="0" width="18" height="16" fill="#a3a8b0"/><circle cx="5" cy="4.5" r="2" fill="#fff"/><path d="M1.5 14.5 L7 8.5 L10 11.5 L13 8.5 L16.5 12 V14.5 Z" fill="#fff"/></svg>
<svg style="left:1760.00px;top:1004.00px" width="21" height="12.5" viewBox="0 0 21 12.5"><rect x="0" y="0" width="10" height="12.5" fill="#1b2538"/><rect x="11.5" y="0" width="9.5" height="12.5" fill="#1b2538"/><rect x="1.5" y="2" width="5" height="1.6" fill="#fff"/><rect x="1.5" y="5.5" width="5" height="1.6" fill="#fff"/><rect x="1.5" y="9" width="3" height="1.6" fill="#fff"/></svg>
<div class="t" style="left:1799.60px;top:1002.97px;font-size:15.80px;color:#333a44;"><i class="k2">1</i><i class="k2">2</i><i class="km11">:</i><i class="k2">2</i><i class="k2">7</i><i class="km11">:</i><i class="k2">2</i><i class="k2">6</i><i class="km9"> </i><i class="k3">(</i><i class="km5">+</i><i class="k2">0</i><i class="k2">3</i><i class="k5">)</i></div>
<div class="a" style="left:0.00px;top:1030.00px;width:1920.00px;height:50.00px;background:#1c1c1c"></div>
<svg style="left:20.00px;top:1044.50px" width="21" height="21" viewBox="0 0 21 21"><path d="M0 3 L8.6 1.8 V10 H0 Z M9.8 1.6 L21 0 V10 H9.8 Z M0 11 H8.6 V19.2 L0 18 Z M9.8 11 H21 V21 L9.8 19.4 Z" fill="#fff"/></svg>
<div class="a" style="left:60.00px;top:1030.00px;width:360.00px;height:50.00px;background:#f2f2f2;border-top:1px solid #cfcfcf"></div>
<svg style="left:75.00px;top:1045.00px" width="20" height="20" viewBox="0 0 20 20"><circle cx="12.5" cy="7.5" r="6" fill="none" stroke="#222" stroke-width="1.6"/><path d="M8.2 11.8 L1 19" stroke="#222" stroke-width="1.8"/></svg>
<div class="t" style="left:110.60px;top:1047.54px;font-size:17.60px;color:#222;letter-spacing:1.234px;">Поиск</div>
<svg style="left:0;top:0" width="1920" height="1080" viewBox="0 0 1920 1080"><defs><linearGradient id="t1" x1="0" y1="0" x2="0.3" y2="1"><stop offset="0" stop-color="#f38ce6"/><stop offset="0.55" stop-color="#d445b8"/><stop offset="1" stop-color="#a8288e"/></linearGradient><linearGradient id="t2" x1="0" y1="0" x2="0.3" y2="1"><stop offset="0" stop-color="#f7a3b0"/><stop offset="0.55" stop-color="#e5506a"/><stop offset="1" stop-color="#b8283e"/></linearGradient><linearGradient id="t3" x1="0" y1="0" x2="0.3" y2="1"><stop offset="0" stop-color="#fde28a"/><stop offset="0.55" stop-color="#eeb22e"/><stop offset="1" stop-color="#c98612"/></linearGradient><linearGradient id="lf" x1="0" y1="0" x2="0" y2="1"><stop offset="0" stop-color="#7dcc4e"/><stop offset="1" stop-color="#2f8a2a"/></linearGradient></defs><path d="M342 1056 C341 1066 343 1072 342 1080" fill="none" stroke="#3c9a2e" stroke-width="2.6"/><path d="M340 1080 C334 1072 328 1062 325 1052 C333 1062 338 1072 344 1080 Z" fill="url(#lf)"/><path d="M343 1080 C348 1072 354 1065 357 1059 C353 1068 350 1074 347 1080 Z" fill="url(#lf)"/><g transform="rotate(8 342 1058)"><path d="M330.0 1038 C327.5 1046.5 330.0 1057 342 1058 C354.0 1057 356.5 1046.5 354.0 1038 L347.2 1041.44 L342 1034 L336.8 1041.44 Z" fill="url(#t1)"/><path d="M336.28 1043.05 C335.5 1048.8 339.4 1054.55 342 1056.16" fill="none" stroke="rgba(255,255,255,0.4)" stroke-width="2"/></g><path d="M372 1057 C371 1067 373 1073 372 1080" fill="none" stroke="#3c9a2e" stroke-width="2.6"/><path d="M370 1080 C364 1072 358 1062 355 1052 C363 1062 368 1072 374 1080 Z" fill="url(#lf)"/><path d="M373 1080 C378 1072 384 1065 387 1059 C383 1068 380 1074 377 1080 Z" fill="url(#lf)"/><g transform="rotate(0 372 1059)"><path d="M362.5 1037 C360.0 1046.5 362.5 1058 372 1059 C381.5 1058 384.0 1046.5 381.5 1037 L376.2 1041.0 L372 1033 L367.8 1041.0 Z" fill="url(#t2)"/><path d="M367.38 1042.75 C366.75 1049.0 369.9 1055.25 372 1057.0" fill="none" stroke="rgba(255,255,255,0.4)" stroke-width="2"/></g><path d="M398 1055 C397 1065 399 1071 398 1080" fill="none" stroke="#3c9a2e" stroke-width="2.6"/><path d="M396 1080 C390 1072 384 1062 381 1052 C389 1062 394 1072 400 1080 Z" fill="url(#lf)"/><path d="M399 1080 C404 1072 410 1065 413 1059 C409 1068 406 1074 403 1080 Z" fill="url(#lf)"/><g transform="rotate(-4 398 1057)"><path d="M387.0 1036 C384.5 1045.0 387.0 1056 398 1057 C409.0 1056 411.5 1045.0 409.0 1036 L402.8 1039.72 L398 1032 L393.2 1039.72 Z" fill="url(#t3)"/><path d="M392.72 1041.4 C392.0 1047.4 395.6 1053.4 398 1055.08" fill="none" stroke="rgba(255,255,255,0.4)" stroke-width="2"/></g></svg>
<svg style="left:439.00px;top:1045.00px" width="22" height="20" viewBox="0 0 22 20"><path d="M0.6 0 V3 H13.4 V0 M0.6 20 V17 H13.4 V20" fill="none" stroke="#fff" stroke-width="1.2"/><rect x="1.6" y="5.5" width="10.8" height="9" fill="none" stroke="#fff" stroke-width="1.4"/><path d="M19.5 0 V20" stroke="#fff" stroke-width="1.2"/><rect x="18.2" y="6" width="3" height="3" fill="#fff"/></svg>
<svg style="left:498.00px;top:1040.00px" width="32" height="31" viewBox="0 0 32 31"><defs><linearGradient id="eg" x1="0" y1="0" x2="0.5" y2="1"><stop offset="0" stop-color="#1aa0ee"/><stop offset="0.6" stop-color="#0f7fd6"/><stop offset="1" stop-color="#0e56a8"/></linearGradient><linearGradient id="eg2" x1="0" y1="0" x2="1" y2="0.8"><stop offset="0" stop-color="#33c2f5"/><stop offset="0.55" stop-color="#2ec6b8"/><stop offset="1" stop-color="#5fdc4a"/></linearGradient><linearGradient id="bc" x1="0" y1="0" x2="0" y2="1"><stop offset="0" stop-color="#ff9c05"/><stop offset="0.5" stop-color="#d97a00"/><stop offset="1" stop-color="#a85800"/></linearGradient></defs><circle cx="16" cy="15.3" r="15" fill="url(#eg)"/><path d="M1.2 13 C2.6 5 8.8 0.3 16 0.3 C24.6 0.3 31 7 31 14.2 C31 19.6 27 23.6 22 23.6 C18.4 23.6 15.8 21 16.4 17.5 C16.8 15.2 15.4 12.6 12.6 11.6 C8.6 10.2 3.6 10.8 1.2 13.8 Z" fill="url(#eg2)"/><path d="M16.6 16.5 C17.2 20.6 20.8 23.4 25 23.2 C27 23.1 28.6 22.5 30 21.4" fill="none" stroke="#1c1c1c" stroke-width="1.9"/><circle cx="16.2" cy="15" r="2.9" fill="#1c1c1c"/><rect x="1" y="19.8" width="15" height="10.2" rx="0.8" fill="url(#bc)"/><rect x="6" y="18.2" width="5" height="2" rx="0.6" fill="none" stroke="#b8720a" stroke-width="1"/><circle cx="8.5" cy="25" r="1" fill="#ffe14a"/></svg>
<svg style="left:561.50px;top:1043.00px" width="29" height="23" viewBox="0 0 29 23"><path d="M0 2 C0 1 1 0 2 0 H10 L12.5 3 H27 C28 3 29 4 29 5 V21 C29 22 28 23 27 23 H2 C1 23 0 22 0 21 Z" fill="#f0c54c"/><path d="M0 6 H29 V21 C29 22 28 23 27 23 H2 C1 23 0 22 0 21 Z" fill="#ffd866"/><path d="M9 23 V15 C9 14 10 13 11 13 H18 C19 13 20 14 20 15 V23 H17 V16 H12 V23 Z" fill="#2f8ce0"/></svg>
<svg style="left:623.00px;top:1041.00px" width="30" height="29" viewBox="0 0 30 29"><path d="M9 7 V3 C9 1.5 10 0.5 11.5 0.5 H18.5 C20 0.5 21 1.5 21 3 V7" fill="none" stroke="#29a8f0" stroke-width="2.2"/><path d="M1 8 C1 6.5 2 5.8 3.3 5.8 H26.7 C28 5.8 29 6.5 29 8 V25 C29 27.5 27.5 29 25 29 H5 C2.5 29 1 27.5 1 25 Z" fill="#f4f4f4"/><rect x="9.5" y="11" width="5" height="5" fill="#f25022"/><rect x="15.5" y="11" width="5" height="5" fill="#7fba00"/><rect x="9.5" y="17" width="5" height="5" fill="#00a4ef"/><rect x="15.5" y="17" width="5" height="5" fill="#ffb900"/></svg>
<svg style="left:685.00px;top:1040.00px" width="33" height="33" viewBox="0 0 33 33"><defs><radialGradient id="ag" cx="0.35" cy="0.3" r="0.8"><stop offset="0" stop-color="#e8f6ff"/><stop offset="0.5" stop-color="#7cc8f2"/><stop offset="1" stop-color="#3a98d8"/></radialGradient></defs><circle cx="15" cy="15" r="14.5" fill="url(#ag)"/><text x="6" y="21" font-family="Liberation Sans" font-weight="700" font-size="14" fill="#1d5fa8">24</text><circle cx="22.5" cy="22.5" r="9" fill="#8a8a8a" stroke="#cfcfcf" stroke-width="1.2"/><text x="18.2" y="28" font-family="Liberation Sans" font-weight="700" font-size="14" fill="#111">3</text></svg>
<div class="a" style="left:732.50px;top:1030.00px;width:61.00px;height:50.00px;background:#3f3f3f"></div>
<svg style="left:746.50px;top:1040.00px" width="31" height="31" viewBox="0 0 31 31"><circle cx="15.5" cy="15.5" r="15" fill="#db3236"/><path d="M15.5 15.5 L28.5 8 A15 15 0 0 1 15.5 30.5 Z" fill="#f4c20d"/><path d="M15.5 15.5 L15.5 30.5 A15 15 0 0 1 2.5 8 Z" fill="#3cba54"/><path d="M15.5 8.5 H28.5 A15 15 0 0 1 30.5 15.5 L15.5 15.5 Z" fill="#f4c20d"/><path d="M2.5 8 L9.4 19 L15.5 15.5" fill="#3cba54"/><circle cx="15.5" cy="15.5" r="7" fill="#fff"/><circle cx="15.5" cy="15.5" r="5.6" fill="#4285f4"/></svg>
<div class="a" style="left:675.00px;top:1077.00px;width:40.00px;height:3.00px;background:#76b9ed"></div>
<div class="a" style="left:716.00px;top:1077.00px;width:10.00px;height:3.00px;background:#5a8fb8"></div>
<div class="a" style="left:732.50px;top:1077.00px;width:61.00px;height:3.00px;background:#76b9ed"></div>
<svg style="left:1610.00px;top:1050.50px" width="16" height="9" viewBox="0 0 16 9"><path d="M0.5 8.5 L8 1 L15.5 8.5" fill="none" stroke="#fff" stroke-width="1.2"/></svg>
<svg style="left:1638.00px;top:1049.00px" width="21" height="12" viewBox="0 0 21 12"><rect x="3.5" y="2.5" width="15.5" height="9" fill="none" stroke="#fff" stroke-width="1.2"/><rect x="5" y="4" width="12.5" height="6" fill="#fff"/><rect x="19.2" y="5" width="1.6" height="4" fill="#fff"/><path d="M1 0 V3 M4 0 V3 M0 3 H5 V5 C5 6 4 6.5 2.5 6.5 C1 6.5 0 6 0 5 Z M2.5 6.5 V11" fill="none" stroke="#fff" stroke-width="1"/></svg>
<svg style="left:1670.50px;top:1048.00px" width="17" height="15" viewBox="0 0 17 15"><g fill="none" stroke="#fff" stroke-width="1.1"><path d="M1 14 A13 13 0 0 1 14 1"/><path d="M4 14 A10 10 0 0 1 14 4"/><path d="M7 14 A7 7 0 0 1 14 7"/><path d="M10 14 A4 4 0 0 1 14 10"/></g><circle cx="14" cy="13" r="1.8" fill="#fff"/></svg>
<svg style="left:1697.50px;top:1046.00px" width="21" height="18" viewBox="0 0 21 18"><path d="M1 6 H4.5 L9 1.5 V16.5 L4.5 12 H1 Z" fill="none" stroke="#fff" stroke-width="1.2"/><path d="M12 6.5 A3 3 0 0 1 12 11.5 M14.5 4 A6.5 6.5 0 0 1 14.5 14 M17 1.5 A10 10 0 0 1 17 16.5" fill="none" stroke="#fff" stroke-width="1.2"/></svg>
<div class="t" style="left:1732.50px;top:1048.99px;font-size:14.60px;color:#fff;letter-spacing:-2.273px;">РУС</div>
<div class="t" style="left:1794.00px;top:1036.89px;font-size:14.60px;color:#fff;letter-spacing:-0.883px;">12:27</div>
<div class="t" style="left:1776.30px;top:1059.49px;font-size:14.60px;color:#fff;letter-spacing:-0.394px;">25.03.2024</div>
<svg style="left:1868.50px;top:1045.00px" width="22" height="20" viewBox="0 0 22 20"><path d="M0 0 H21 V14 H8 L3 19 V14 H0 Z" fill="#fff"/><path d="M4 4 H17 M4 7.5 H17 M4 11 H13" stroke="#1c1c1c" stroke-width="1.3"/></svg>
<div class="a" style="left:1878.30px;top:1054.70px;width:20.50px;height:20.50px;border-radius:11px;background:#3a3a3a;border:1.3px solid #8d8d8d"></div>
<div class="t" style="left:1884.00px;top:1059.20px;font-size:14.00px;color:#fff;font-weight:700;">4</div>
<div class="a" style="left:1913.50px;top:1030.00px;width:1.00px;height:50.00px;background:#5a5a5a"></div>
</body></html>
